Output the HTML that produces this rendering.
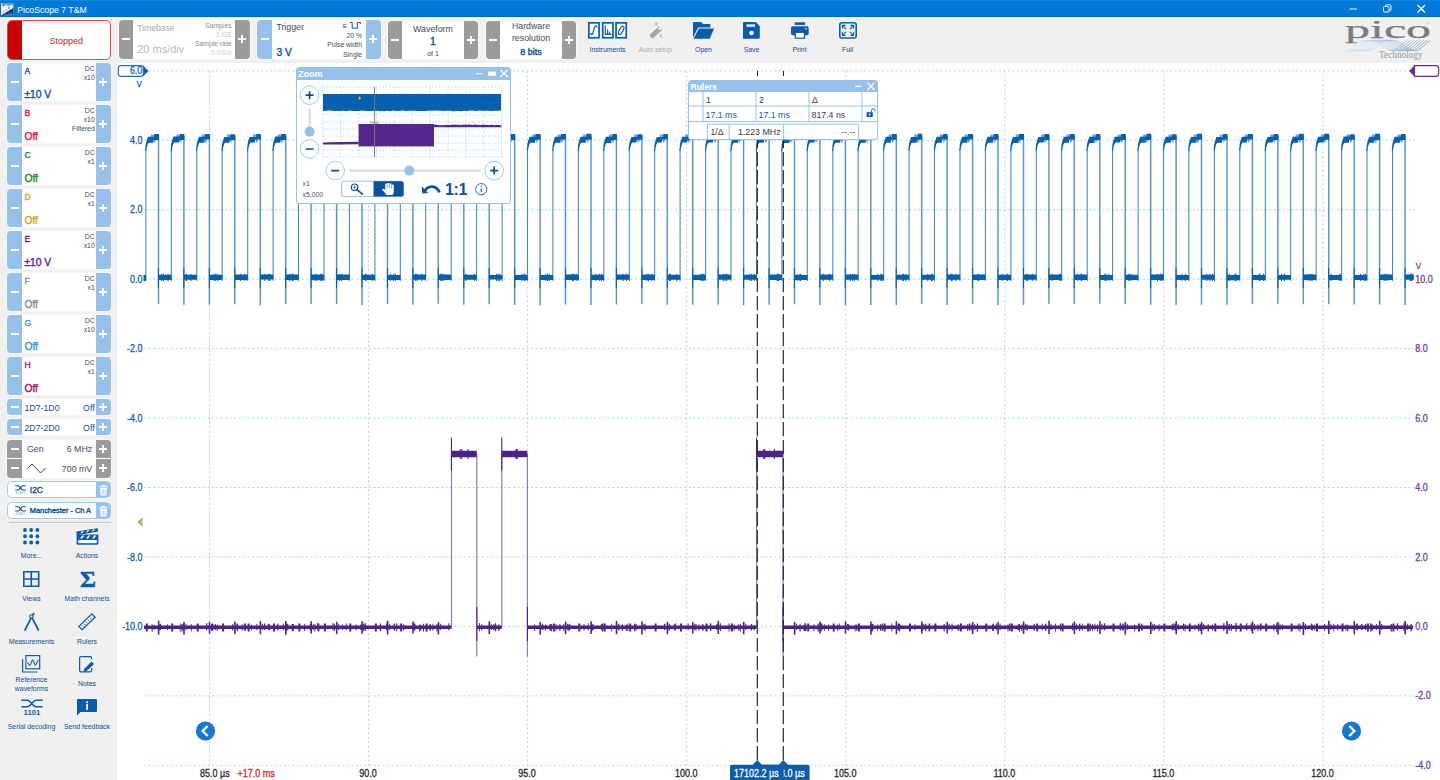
<!DOCTYPE html><html><head><meta charset="utf-8"><title>PicoScope 7 T&amp;M</title><style>

*{box-sizing:border-box;margin:0;padding:0}
html,body{width:1440px;height:780px;overflow:hidden}
body{background:#f0f0f0;font-family:"Liberation Sans",sans-serif;position:relative;color:#0b4f94}
.abs{position:absolute}
#title{left:0;top:0;width:1440px;height:17px;background:#0078d7;border-bottom:1px solid #0067cc;border-top:1px solid #1384db}
#title .t{position:absolute;left:17.3px;top:2.6px;font-size:8.7px;color:#fff;line-height:12px;white-space:nowrap}
#graphbg{left:117px;top:63px;width:1323px;height:717px;background:#fff}
.blk{position:absolute;background:#fff;border-radius:4px;overflow:hidden;box-shadow:0 0 0 0.8px rgba(255,255,255,.55)}
.btn{position:absolute;top:0;bottom:0;width:14.4px;background:#96c1eb}
.btn.g{background:#9b9b9b}
.btn.l{left:0}.btn.r{right:0}
.lp .btn.r{width:15.4px}
.btn i{position:absolute;left:50%;top:50%;background:#fff}
.btn i.h{width:8px;height:2px;margin-left:-4px;margin-top:-1px}
.btn i.v{width:2px;height:8px;margin-left:-1px;margin-top:-4px}
.tx{position:absolute;white-space:nowrap;line-height:1}
.sm{font-size:7.5px;color:#44546a;text-align:right;right:16.5px}
.lab{position:absolute;font-size:7.5px;color:#0b4f94;text-align:center;white-space:nowrap;line-height:9px;transform:translateX(-50%)}
svg{position:absolute;overflow:visible}
.sb{-webkit-text-stroke:0.35px currentColor}

</style></head><body>
<div id="graphbg" class="abs"></div>
<svg style="left:0;top:0" width="1440" height="780" viewBox="0 0 1440 780"><path d="M148.5 70.8H1409M144.2 140.2H1414.6M144.2 209.7H1414.6M144.2 279.2H1414.6M144.2 348.6H1414.6M144.2 418.1H1414.6M144.2 487.5H1414.6M144.2 557H1414.6M144.2 626.4H1414.6M144.2 695.9H1414.6M144.2 765.3H1414.6M209.5 70.8V765.5M368.6 70.8V765.5M527.6 70.8V765.5M686.7 70.8V765.5M845.8 70.8V765.5M1004.8 70.8V765.5M1163.9 70.8V765.5M1323 70.8V765.5" fill="none" stroke="#a3d7ee" stroke-width="1" stroke-dasharray="2 2.5"/><path d="M145.9 281V149M171.3 281V149M196.8 281V149M222.2 281V149M247.7 281V149M273.1 281V149M298.5 281V149M324 281V149M349.4 281V149M374.9 281V149M400.3 281V149M425.7 281V149M451.2 281V149M476.6 281V149M502.1 281V149M527.5 281V149M552.9 281V149M578.4 281V149M603.8 281V149M629.3 281V149M654.7 281V149M680.1 281V149M705.6 281V149M731 281V149M756.5 281V149M781.9 281V149M807.3 281V149M832.8 281V149M858.2 281V149M883.7 281V149M909.1 281V149M934.5 281V149M960 281V149M985.4 281V149M1010.9 281V149M1036.3 281V149M1061.7 281V149M1087.2 281V149M1112.6 281V149M1138.1 281V149M1163.5 281V149M1188.9 281V149M1214.4 281V149M1239.8 281V149M1265.3 281V149M1290.7 281V149M1316.1 281V149M1341.6 281V149M1367 281V149M1392.5 281V149" fill="none" stroke="#3f88c2" stroke-width="1.05"/><path d="M158.5 136V304M183.9 136V304.7M209.4 136V304.5M234.8 136V304.2M260.3 136V305.3M285.7 136V303.9M311.1 136V304M336.6 136V304M362 136V305.2M387.5 136V304M412.9 136V304.7M438.3 136V303.7M463.8 136V304.8M489.2 136V304.2M514.7 136V305.1M540.1 136V305.3M565.5 136V304.5M591 136V305.1M616.4 136V304.6M641.9 136V304M667.3 136V304.8M692.7 136V304.7M718.2 136V304.8M743.6 136V305.2M769.1 136V304.7M794.5 136V304.2M819.9 136V305M845.4 136V305.2M870.8 136V305.1M896.3 136V305.3M921.7 136V304.1M947.1 136V304.9M972.6 136V304.1M998 136V305.1M1023.5 136V305.1M1048.9 136V303.7M1074.3 136V303.9M1099.8 136V303.8M1125.2 136V304M1150.7 136V304.7M1176.1 136V305.1M1201.5 136V304.7M1227 136V304.8M1252.4 136V304.1M1277.9 136V303.8M1303.3 136V304.3M1328.7 136V304.3M1354.2 136V304.5M1379.6 136V304.5M1405.1 136V304.9" fill="none" stroke="#5496ca" stroke-width="1.45"/><path d="M150.8 134.5H154.4V137H150.8ZM176.5 134.5H179.8V137H176.5ZM201.7 134.5H205.3V137H201.7ZM227 134.5H230.7V137H227ZM252.8 134.5H256.2V137H252.8ZM277.8 134.5H281.6V137H277.8ZM303.2 134.5H307V137H303.2ZM328.7 134.5H332.5V137H328.7ZM354.3 134.5H357.9V137H354.3ZM379.9 134.5H383.4V137H379.9ZM405.1 134.5H408.8V137H405.1ZM430.8 134.5H434.2V137H430.8ZM456.3 134.5H459.7V137H456.3ZM481.5 134.5H485.1V137H481.5ZM506.9 134.5H510.6V137H506.9ZM532.2 134.5H536V137H532.2ZM557.6 134.5H561.4V137H557.6ZM583.1 134.5H586.9V137H583.1ZM608.9 134.5H612.3V137H608.9ZM634.1 134.5H637.8V137H634.1ZM659.8 134.5H663.2V137H659.8ZM684.9 134.5H688.6V137H684.9ZM710.2 134.5H714.1V137H710.2ZM736.1 134.5H739.5V137H736.1ZM761.6 134.5H765V137H761.6ZM786.8 134.5H790.4V137H786.8ZM812.4 134.5H815.8V137H812.4ZM837.9 134.5H841.3V137H837.9ZM863 134.5H866.7V137H863ZM888.6 134.5H892.2V137H888.6ZM914.2 134.5H917.6V137H914.2ZM939.7 134.5H943V137H939.7ZM964.7 134.5H968.5V137H964.7ZM990.4 134.5H993.9V137H990.4ZM1015.6 134.5H1019.4V137H1015.6ZM1041.2 134.5H1044.8V137H1041.2ZM1066.5 134.5H1070.2V137H1066.5ZM1092.3 134.5H1095.7V137H1092.3ZM1117.6 134.5H1121.1V137H1117.6ZM1143.1 134.5H1146.6V137H1143.1ZM1168.6 134.5H1172V137H1168.6ZM1193.6 134.5H1197.4V137H1193.6ZM1219.5 134.5H1222.9V137H1219.5ZM1244.7 134.5H1248.3V137H1244.7ZM1270.2 134.5H1273.8V137H1270.2ZM1295.6 134.5H1299.2V137H1295.6ZM1320.9 134.5H1324.6V137H1320.9ZM1346.7 134.5H1350.1V137H1346.7ZM1371.8 134.5H1375.5V137H1371.8ZM1397.6 134.5H1401V137H1397.6Z" fill="#6aa5d6"/><path d="M143.5 275H146V281H143.5ZM145.2 151L145.7 144.5L146.5 141L147.5 138.6L147.9 136.8H154L154.3 134H159V140H153.7L153.2 142.7H148.6L147.6 144.5L146.6 148.5L146.1 151ZM154.3 139.5h0.6v2.9h-0.6ZM155.4 139.5h0.5v2.3h-0.5ZM157.9 268H159V288H157.9ZM158.5 274.7H171.5V280H158.5ZM167.5 273.8H168.5V281H167.5ZM160.9 273.8H161.9V281H160.9ZM162.9 273.8H163.9V281H162.9ZM170.6 151L171.1 144.5L171.9 141L172.9 138.6L173.3 136.6H179.7L180 134.1H184.4V139.9H179.4L178.9 142.5H174L173 144.5L172 148.5L171.5 151ZM179.7 139.5h0.6v2.9h-0.6ZM180.8 139.5h0.5v2.3h-0.5ZM183.3 268H184.4V288H183.3ZM183.9 274.8H197V279.7H183.9ZM185.6 273.8H186.6V281H185.6ZM190.5 273.8H191.5V281H190.5ZM186 273.8H187V281H186ZM196.1 151L196.6 144.5L197.4 141L198.4 138.6L198.8 136.7H204.8L205.1 133.9H209.9V139.6H204.8L204.3 142.7H199.5L198.5 144.5L197.5 148.5L197 151ZM205.2 139.5h0.6v2.9h-0.6ZM206.3 139.5h0.5v2.3h-0.5ZM208.8 268H209.9V288H208.8ZM209.4 274.8H222.4V279.9H209.4ZM217.2 273.8H218.2V281H217.2ZM215.2 273.8H216.2V281H215.2ZM213.5 273.8H214.5V281H213.5ZM221.5 151L222 144.5L222.8 141L223.8 138.6L224.2 137H230.2L230.5 134.2H235.3V140H229.9L229.4 142.8H224.9L223.9 144.5L222.9 148.5L222.4 151ZM230.6 139.5h0.6v2.9h-0.6ZM231.7 139.5h0.5v2.3h-0.5ZM234.2 268H235.3V288H234.2ZM234.8 274.4H247.9V280.1H234.8ZM240.1 273.8H241.1V281H240.1ZM244.4 273.8H245.4V281H244.4ZM240 273.8H241V281H240ZM247 151L247.5 144.5L248.3 141L249.3 138.6L249.7 137H256L256.3 134.1H260.8V139.6H255.4L254.9 142.6H250.4L249.4 144.5L248.4 148.5L247.9 151ZM256.1 139.5h0.6v2.9h-0.6ZM257.2 139.5h0.5v2.3h-0.5ZM259.7 268H260.8V288H259.7ZM260.3 274.6H273.3V279.6H260.3ZM267.7 273.8H268.7V281H267.7ZM269.2 273.8H270.2V281H269.2ZM264.3 273.8H265.3V281H264.3ZM272.4 151L272.9 144.5L273.7 141L274.7 138.6L275.1 136.6H281L281.3 133.9H286.2V140H280.8L280.3 142.8H275.8L274.8 144.5L273.8 148.5L273.3 151ZM281.5 139.5h0.6v2.9h-0.6ZM282.6 139.5h0.5v2.3h-0.5ZM285.1 268H286.2V288H285.1ZM285.7 274.4H298.7V280.1H285.7ZM288.9 273.8H289.9V281H288.9ZM292.5 273.8H293.5V281H292.5ZM291.5 273.8H292.5V281H291.5ZM297.8 151L298.3 144.5L299.1 141L300.1 138.6L300.5 136.7H306.4L306.7 134.1H311.6V139.6H306.3L305.8 142.8H301.2L300.2 144.5L299.2 148.5L298.7 151ZM306.9 139.5h0.6v2.9h-0.6ZM308 139.5h0.5v2.3h-0.5ZM310.5 268H311.6V288H310.5ZM311.1 274.6H324.2V280.2H311.1ZM320.3 273.8H321.3V281H320.3ZM315.5 273.8H316.5V281H315.5ZM321 273.8H322V281H321ZM323.3 151L323.8 144.5L324.6 141L325.6 138.6L326 136.7H331.8L332.1 134H337.1V140H332L331.5 142.8H326.7L325.7 144.5L324.7 148.5L324.2 151ZM332.4 139.5h0.6v2.9h-0.6ZM333.5 139.5h0.5v2.3h-0.5ZM336 268H337.1V288H336ZM336.6 274.6H349.6V280.1H336.6ZM341.2 273.8H342.2V281H341.2ZM340.9 273.8H341.9V281H340.9ZM338.8 273.8H339.8V281H338.8ZM348.7 151L349.2 144.5L350 141L351 138.6L351.4 136.6H357.4L357.7 134H362.5V139.7H357.2L356.7 142.7H352.1L351.1 144.5L350.1 148.5L349.6 151ZM357.8 139.5h0.6v2.9h-0.6ZM358.9 139.5h0.5v2.3h-0.5ZM361.4 268H362.5V288H361.4ZM362 274.7H375.1V279.9H362ZM371.8 273.8H372.8V281H371.8ZM365.3 273.8H366.3V281H365.3ZM365 273.8H366V281H365ZM374.2 151L374.7 144.5L375.5 141L376.5 138.6L376.9 137H383.1L383.4 134.1H388V139.7H382.9L382.4 142.6H377.6L376.6 144.5L375.6 148.5L375.1 151ZM383.3 139.5h0.6v2.9h-0.6ZM384.4 139.5h0.5v2.3h-0.5ZM386.9 268H388V288H386.9ZM387.5 275H400.5V280.1H387.5ZM394.7 273.8H395.7V281H394.7ZM393 273.8H394V281H393ZM389.9 273.8H390.9V281H389.9ZM399.6 151L400.1 144.5L400.9 141L401.9 138.6L402.3 136.6H408.3L408.6 134.2H413.4V139.7H408.3L407.8 142.8H403L402 144.5L401 148.5L400.5 151ZM408.7 139.5h0.6v2.9h-0.6ZM409.8 139.5h0.5v2.3h-0.5ZM412.3 268H413.4V288H412.3ZM412.9 274.6H425.9V279.7H412.9ZM421.2 273.8H422.2V281H421.2ZM415.1 273.8H416.1V281H415.1ZM416.6 273.8H417.6V281H416.6ZM425 151L425.5 144.5L426.3 141L427.3 138.6L427.7 136.8H434.1L434.4 134.1H438.8V139.9H433.4L432.9 142.6H428.4L427.4 144.5L426.4 148.5L425.9 151ZM434.1 139.5h0.6v2.9h-0.6ZM435.2 139.5h0.5v2.3h-0.5ZM437.7 268H438.8V288H437.7ZM438.3 274.6H451.4V279.9H438.3ZM440.4 273.8H441.4V281H440.4ZM441.5 273.8H442.5V281H441.5ZM443.3 273.8H444.3V281H443.3ZM450.5 151L451 144.5L451.8 141L452.8 138.6L453.2 136.8H459.6L459.9 133.9H464.3V139.7H459.1L458.6 142.9H453.9L452.9 144.5L451.9 148.5L451.4 151ZM459.6 139.5h0.6v2.9h-0.6ZM460.7 139.5h0.5v2.3h-0.5ZM463.2 268H464.3V288H463.2ZM463.8 274.8H476.8V279.7H463.8ZM465.6 273.8H466.6V281H465.6ZM465.4 273.8H466.4V281H465.4ZM473.9 273.8H474.9V281H473.9ZM475.9 151L476.4 144.5L477.2 141L478.2 138.6L478.6 136.9H484.7L485 134.2H489.7V139.6H484.5L484 142.8H479.3L478.3 144.5L477.3 148.5L476.8 151ZM485 139.5h0.6v2.9h-0.6ZM486.1 139.5h0.5v2.3h-0.5ZM488.6 268H489.7V288H488.6ZM489.2 275H502.3V279.6H489.2ZM495.9 273.8H496.9V281H495.9ZM497.7 273.8H498.7V281H497.7ZM499.3 273.8H500.3V281H499.3ZM501.4 151L501.9 144.5L502.7 141L503.7 138.6L504.1 136.9H510.1L510.4 134.1H515.2V139.9H510L509.5 142.9H504.8L503.8 144.5L502.8 148.5L502.3 151ZM510.5 139.5h0.6v2.9h-0.6ZM511.6 139.5h0.5v2.3h-0.5ZM514.1 268H515.2V288H514.1ZM514.7 274.9H527.7V279.9H514.7ZM523.7 273.8H524.7V281H523.7ZM524.4 273.8H525.4V281H524.4ZM521.6 273.8H522.6V281H521.6ZM526.8 151L527.3 144.5L528.1 141L529.1 138.6L529.5 136.8H535.3L535.6 134H540.6V139.8H535.4L534.9 142.7H530.2L529.2 144.5L528.2 148.5L527.7 151ZM535.9 139.5h0.6v2.9h-0.6ZM537 139.5h0.5v2.3h-0.5ZM539.5 268H540.6V288H539.5ZM540.1 274.9H553.1V280H540.1ZM545.3 273.8H546.3V281H545.3ZM548.6 273.8H549.6V281H548.6ZM547.1 273.8H548.1V281H547.1ZM552.2 151L552.7 144.5L553.5 141L554.5 138.6L554.9 136.8H560.8L561.1 134.1H566V139.6H560.8L560.3 142.8H555.6L554.6 144.5L553.6 148.5L553.1 151ZM561.3 139.5h0.6v2.9h-0.6ZM562.4 139.5h0.5v2.3h-0.5ZM564.9 268H566V288H564.9ZM565.5 274.5H578.6V280H565.5ZM571.8 273.8H572.8V281H571.8ZM572.9 273.8H573.9V281H572.9ZM575.8 273.8H576.8V281H575.8ZM577.7 151L578.2 144.5L579 141L580 138.6L580.4 136.7H586.3L586.6 133.8H591.5V139.7H586L585.5 142.8H581.1L580.1 144.5L579.1 148.5L578.6 151ZM586.8 139.5h0.6v2.9h-0.6ZM587.9 139.5h0.5v2.3h-0.5ZM590.4 268H591.5V288H590.4ZM591 274.8H604V279.9H591ZM601 273.8H602V281H601ZM595.6 273.8H596.6V281H595.6ZM598.8 273.8H599.8V281H598.8ZM603.1 151L603.6 144.5L604.4 141L605.4 138.6L605.8 136.7H612.1L612.4 134H616.9V140H611.6L611.1 142.9H606.5L605.5 144.5L604.5 148.5L604 151ZM612.2 139.5h0.6v2.9h-0.6ZM613.3 139.5h0.5v2.3h-0.5ZM615.8 268H616.9V288H615.8ZM616.4 274.6H629.5V279.7H616.4ZM622.6 273.8H623.6V281H622.6ZM625.9 273.8H626.9V281H625.9ZM626 273.8H627V281H626ZM628.6 151L629.1 144.5L629.9 141L630.9 138.6L631.3 136.9H637.3L637.6 134.2H642.4V139.7H636.9L636.4 142.6H632L631 144.5L630 148.5L629.5 151ZM637.7 139.5h0.6v2.9h-0.6ZM638.8 139.5h0.5v2.3h-0.5ZM641.3 268H642.4V288H641.3ZM641.9 274.6H654.9V280H641.9ZM648.1 273.8H649.1V281H648.1ZM646.4 273.8H647.4V281H646.4ZM651.3 273.8H652.3V281H651.3ZM654 151L654.5 144.5L655.3 141L656.3 138.6L656.7 137H663L663.3 134H667.8V139.6H662.3L661.8 142.5H657.4L656.4 144.5L655.4 148.5L654.9 151ZM663.1 139.5h0.6v2.9h-0.6ZM664.2 139.5h0.5v2.3h-0.5ZM666.7 268H667.8V288H666.7ZM667.3 274.7H680.3V279.8H667.3ZM676.3 273.8H677.3V281H676.3ZM669 273.8H670V281H669ZM670.1 273.8H671.1V281H670.1ZM679.4 151L679.9 144.5L680.7 141L681.7 138.6L682.1 136.8H688L688.3 133.8H693.2V140H687.7L687.2 142.6H682.8L681.8 144.5L680.8 148.5L680.3 151ZM688.5 139.5h0.6v2.9h-0.6ZM689.6 139.5h0.5v2.3h-0.5ZM692.1 268H693.2V288H692.1ZM692.7 274.7H705.8V280H692.7ZM700.5 273.8H701.5V281H700.5ZM701.9 273.8H702.9V281H701.9ZM703.3 273.8H704.3V281H703.3ZM704.9 151L705.4 144.5L706.2 141L707.2 138.6L707.6 136.9H713.4L713.7 133.9H718.7V139.8H713.4L712.9 142.6H708.3L707.3 144.5L706.3 148.5L705.8 151ZM714 139.5h0.6v2.9h-0.6ZM715.1 139.5h0.5v2.3h-0.5ZM717.6 268H718.7V288H717.6ZM718.2 274.5H731.2V279.8H718.2ZM723 273.8H724V281H723ZM726.3 273.8H727.3V281H726.3ZM724.6 273.8H725.6V281H724.6ZM730.3 151L730.8 144.5L731.6 141L732.6 138.6L733 136.8H739.4L739.7 134.1H744.1V139.7H738.6L738.1 142.8H733.7L732.7 144.5L731.7 148.5L731.2 151ZM739.4 139.5h0.6v2.9h-0.6ZM740.5 139.5h0.5v2.3h-0.5ZM743 268H744.1V288H743ZM743.6 274.8H756.7V279.7H743.6ZM749.4 273.8H750.4V281H749.4ZM751.1 273.8H752.1V281H751.1ZM753.8 273.8H754.8V281H753.8ZM755.8 151L756.3 144.5L757.1 141L758.1 138.6L758.5 136.8H764.8L765.1 134H769.6V140H764.2L763.7 142.8H759.2L758.2 144.5L757.2 148.5L756.7 151ZM764.9 139.5h0.6v2.9h-0.6ZM766 139.5h0.5v2.3h-0.5ZM768.5 268H769.6V288H768.5ZM769.1 274.5H782.1V280H769.1ZM778.3 273.8H779.3V281H778.3ZM776.7 273.8H777.7V281H776.7ZM777.4 273.8H778.4V281H777.4ZM781.2 151L781.7 144.5L782.5 141L783.5 138.6L783.9 136.7H790L790.3 134.2H795V140H789.8L789.3 142.9H784.6L783.6 144.5L782.6 148.5L782.1 151ZM790.3 139.5h0.6v2.9h-0.6ZM791.4 139.5h0.5v2.3h-0.5ZM793.9 268H795V288H793.9ZM794.5 274.9H807.5V280.1H794.5ZM799.3 273.8H800.3V281H799.3ZM796.8 273.8H797.8V281H796.8ZM800.2 273.8H801.2V281H800.2ZM806.6 151L807.1 144.5L807.9 141L808.9 138.6L809.3 136.8H815.6L815.9 134.1H820.4V139.8H814.9L814.4 142.5H810L809 144.5L808 148.5L807.5 151ZM815.7 139.5h0.6v2.9h-0.6ZM816.8 139.5h0.5v2.3h-0.5ZM819.3 268H820.4V288H819.3ZM819.9 274.5H833V279.8H819.9ZM828.9 273.8H829.9V281H828.9ZM822.8 273.8H823.8V281H822.8ZM822.9 273.8H823.9V281H822.9ZM832.1 151L832.6 144.5L833.4 141L834.4 138.6L834.8 136.8H841.1L841.4 134.1H845.9V140H840.6L840.1 142.8H835.5L834.5 144.5L833.5 148.5L833 151ZM841.2 139.5h0.6v2.9h-0.6ZM842.3 139.5h0.5v2.3h-0.5ZM844.8 268H845.9V288H844.8ZM845.4 274.5H858.4V279.7H845.4ZM851.9 273.8H852.9V281H851.9ZM849.6 273.8H850.6V281H849.6ZM853.8 273.8H854.8V281H853.8ZM857.5 151L858 144.5L858.8 141L859.8 138.6L860.2 136.9H866.2L866.5 134H871.3V140H866L865.5 142.7H860.9L859.9 144.5L858.9 148.5L858.4 151ZM866.6 139.5h0.6v2.9h-0.6ZM867.7 139.5h0.5v2.3h-0.5ZM870.2 268H871.3V288H870.2ZM870.8 274.9H883.9V279.7H870.8ZM880.4 273.8H881.4V281H880.4ZM881.5 273.8H882.5V281H881.5ZM877.3 273.8H878.3V281H877.3ZM883 151L883.5 144.5L884.3 141L885.3 138.6L885.7 136.8H891.8L892.1 133.9H896.8V139.8H891.2L890.7 142.7H886.4L885.4 144.5L884.4 148.5L883.9 151ZM892.1 139.5h0.6v2.9h-0.6ZM893.2 139.5h0.5v2.3h-0.5ZM895.7 268H896.8V288H895.7ZM896.3 274.7H909.3V279.8H896.3ZM905.4 273.8H906.4V281H905.4ZM903.1 273.8H904.1V281H903.1ZM902.4 273.8H903.4V281H902.4ZM908.4 151L908.9 144.5L909.7 141L910.7 138.6L911.1 136.9H917.5L917.8 133.8H922.2V139.8H917.1L916.6 142.7H911.8L910.8 144.5L909.8 148.5L909.3 151ZM917.5 139.5h0.6v2.9h-0.6ZM918.6 139.5h0.5v2.3h-0.5ZM921.1 268H922.2V288H921.1ZM921.7 274.7H934.7V279.7H921.7ZM927.3 273.8H928.3V281H927.3ZM930.9 273.8H931.9V281H930.9ZM931.8 273.8H932.8V281H931.8ZM933.8 151L934.3 144.5L935.1 141L936.1 138.6L936.5 136.8H942.9L943.2 133.9H947.6V139.6H942.2L941.7 142.7H937.2L936.2 144.5L935.2 148.5L934.7 151ZM942.9 139.5h0.6v2.9h-0.6ZM944 139.5h0.5v2.3h-0.5ZM946.5 268H947.6V288H946.5ZM947.1 274.4H960.2V279.7H947.1ZM950.8 273.8H951.8V281H950.8ZM955.2 273.8H956.2V281H955.2ZM951.7 273.8H952.7V281H951.7ZM959.3 151L959.8 144.5L960.6 141L961.6 138.6L962 136.7H967.9L968.2 134H973.1V139.6H967.8L967.3 142.8H962.7L961.7 144.5L960.7 148.5L960.2 151ZM968.4 139.5h0.6v2.9h-0.6ZM969.5 139.5h0.5v2.3h-0.5ZM972 268H973.1V288H972ZM972.6 274.5H985.6V279.9H972.6ZM978.2 273.8H979.2V281H978.2ZM977.6 273.8H978.6V281H977.6ZM978 273.8H979V281H978ZM984.7 151L985.2 144.5L986 141L987 138.6L987.4 136.8H993.6L993.9 133.9H998.5V139.7H993.2L992.7 142.8H988.1L987.1 144.5L986.1 148.5L985.6 151ZM993.8 139.5h0.6v2.9h-0.6ZM994.9 139.5h0.5v2.3h-0.5ZM997.4 268H998.5V288H997.4ZM998 274.8H1011.1V280.1H998ZM1001.7 273.8H1002.7V281H1001.7ZM1006.6 273.8H1007.6V281H1006.6ZM1007.2 273.8H1008.2V281H1007.2ZM1010.2 151L1010.7 144.5L1011.5 141L1012.5 138.6L1012.9 137H1018.8L1019.1 133.9H1024V139.7H1018.9L1018.4 142.9H1013.6L1012.6 144.5L1011.6 148.5L1011.1 151ZM1019.3 139.5h0.6v2.9h-0.6ZM1020.4 139.5h0.5v2.3h-0.5ZM1022.9 268H1024V288H1022.9ZM1023.5 274.5H1036.5V279.7H1023.5ZM1031.9 273.8H1032.9V281H1031.9ZM1027.4 273.8H1028.4V281H1027.4ZM1025.9 273.8H1026.9V281H1025.9ZM1035.6 151L1036.1 144.5L1036.9 141L1037.9 138.6L1038.3 136.9H1044.3L1044.6 134H1049.4V139.9H1044.2L1043.7 142.6H1039L1038 144.5L1037 148.5L1036.5 151ZM1044.7 139.5h0.6v2.9h-0.6ZM1045.8 139.5h0.5v2.3h-0.5ZM1048.3 268H1049.4V288H1048.3ZM1048.9 274.5H1061.9V280H1048.9ZM1059.1 273.8H1060.1V281H1059.1ZM1059.6 273.8H1060.6V281H1059.6ZM1051.5 273.8H1052.5V281H1051.5ZM1061 151L1061.5 144.5L1062.3 141L1063.3 138.6L1063.7 136.8H1069.7L1070 134.1H1074.8V139.8H1069.3L1068.8 142.8H1064.4L1063.4 144.5L1062.4 148.5L1061.9 151ZM1070.1 139.5h0.6v2.9h-0.6ZM1071.2 139.5h0.5v2.3h-0.5ZM1073.7 268H1074.8V288H1073.7ZM1074.3 274.4H1087.4V279.9H1074.3ZM1080.7 273.8H1081.7V281H1080.7ZM1081.2 273.8H1082.2V281H1081.2ZM1077.2 273.8H1078.2V281H1077.2ZM1086.5 151L1087 144.5L1087.8 141L1088.8 138.6L1089.2 136.7H1095.5L1095.8 133.9H1100.3V140H1094.8L1094.3 142.9H1089.9L1088.9 144.5L1087.9 148.5L1087.4 151ZM1095.6 139.5h0.6v2.9h-0.6ZM1096.7 139.5h0.5v2.3h-0.5ZM1099.2 268H1100.3V288H1099.2ZM1099.8 275H1112.8V279.9H1099.8ZM1108.5 273.8H1109.5V281H1108.5ZM1104.4 273.8H1105.4V281H1104.4ZM1105.7 273.8H1106.7V281H1105.7ZM1111.9 151L1112.4 144.5L1113.2 141L1114.2 138.6L1114.6 136.8H1120.8L1121.1 134H1125.7V139.9H1120.6L1120.1 142.5H1115.3L1114.3 144.5L1113.3 148.5L1112.8 151ZM1121 139.5h0.6v2.9h-0.6ZM1122.1 139.5h0.5v2.3h-0.5ZM1124.6 268H1125.7V288H1124.6ZM1125.2 274.7H1138.3V280H1125.2ZM1130.6 273.8H1131.6V281H1130.6ZM1128.6 273.8H1129.6V281H1128.6ZM1128.3 273.8H1129.3V281H1128.3ZM1137.4 151L1137.9 144.5L1138.7 141L1139.7 138.6L1140.1 136.8H1146.3L1146.6 133.8H1151.2V140H1146L1145.5 142.8H1140.8L1139.8 144.5L1138.8 148.5L1138.3 151ZM1146.5 139.5h0.6v2.9h-0.6ZM1147.6 139.5h0.5v2.3h-0.5ZM1150.1 268H1151.2V288H1150.1ZM1150.7 274.6H1163.7V280H1150.7ZM1157 273.8H1158V281H1157ZM1161.5 273.8H1162.5V281H1161.5ZM1159.8 273.8H1160.8V281H1159.8ZM1162.8 151L1163.3 144.5L1164.1 141L1165.1 138.6L1165.5 136.7H1171.8L1172.1 134.2H1176.6V139.9H1171.3L1170.8 142.8H1166.2L1165.2 144.5L1164.2 148.5L1163.7 151ZM1171.9 139.5h0.6v2.9h-0.6ZM1173 139.5h0.5v2.3h-0.5ZM1175.5 268H1176.6V288H1175.5ZM1176.1 274.9H1189.1V280H1176.1ZM1184.9 273.8H1185.9V281H1184.9ZM1184.9 273.8H1185.9V281H1184.9ZM1181.5 273.8H1182.5V281H1181.5ZM1188.2 151L1188.7 144.5L1189.5 141L1190.5 138.6L1190.9 136.9H1196.7L1197 133.8H1202V139.7H1196.7L1196.2 142.7H1191.6L1190.6 144.5L1189.6 148.5L1189.1 151ZM1197.3 139.5h0.6v2.9h-0.6ZM1198.4 139.5h0.5v2.3h-0.5ZM1200.9 268H1202V288H1200.9ZM1201.5 274.8H1214.6V279.7H1201.5ZM1212 273.8H1213V281H1212ZM1209.4 273.8H1210.4V281H1209.4ZM1206.2 273.8H1207.2V281H1206.2ZM1213.7 151L1214.2 144.5L1215 141L1216 138.6L1216.4 136.9H1222.8L1223.1 134H1227.5V139.8H1222.3L1221.8 142.7H1217.1L1216.1 144.5L1215.1 148.5L1214.6 151ZM1222.8 139.5h0.6v2.9h-0.6ZM1223.9 139.5h0.5v2.3h-0.5ZM1226.4 268H1227.5V288H1226.4ZM1227 274.9H1240V280.2H1227ZM1228.7 273.8H1229.7V281H1228.7ZM1234.3 273.8H1235.3V281H1234.3ZM1235.5 273.8H1236.5V281H1235.5ZM1239.1 151L1239.6 144.5L1240.4 141L1241.4 138.6L1241.8 136.7H1247.8L1248.1 134H1252.9V139.6H1247.4L1246.9 142.6H1242.5L1241.5 144.5L1240.5 148.5L1240 151ZM1248.2 139.5h0.6v2.9h-0.6ZM1249.3 139.5h0.5v2.3h-0.5ZM1251.8 268H1252.9V288H1251.8ZM1252.4 274.9H1265.5V279.9H1252.4ZM1258.7 273.8H1259.7V281H1258.7ZM1263.1 273.8H1264.1V281H1263.1ZM1259.3 273.8H1260.3V281H1259.3ZM1264.6 151L1265.1 144.5L1265.9 141L1266.9 138.6L1267.3 137H1273.4L1273.7 134.1H1278.4V140H1273.2L1272.7 142.5H1268L1267 144.5L1266 148.5L1265.5 151ZM1273.7 139.5h0.6v2.9h-0.6ZM1274.8 139.5h0.5v2.3h-0.5ZM1277.3 268H1278.4V288H1277.3ZM1277.9 275H1290.9V279.7H1277.9ZM1283.8 273.8H1284.8V281H1283.8ZM1281 273.8H1282V281H1281ZM1284.1 273.8H1285.1V281H1284.1ZM1290 151L1290.5 144.5L1291.3 141L1292.3 138.6L1292.7 136.8H1298.8L1299.1 133.8H1303.8V140H1298.5L1298 142.7H1293.4L1292.4 144.5L1291.4 148.5L1290.9 151ZM1299.1 139.5h0.6v2.9h-0.6ZM1300.2 139.5h0.5v2.3h-0.5ZM1302.7 268H1303.8V288H1302.7ZM1303.3 274.6H1316.3V280H1303.3ZM1310.1 273.8H1311.1V281H1310.1ZM1307.5 273.8H1308.5V281H1307.5ZM1311.6 273.8H1312.6V281H1311.6ZM1315.4 151L1315.9 144.5L1316.7 141L1317.7 138.6L1318.1 136.7H1324L1324.3 133.8H1329.2V139.7H1324.1L1323.6 142.5H1318.8L1317.8 144.5L1316.8 148.5L1316.3 151ZM1324.5 139.5h0.6v2.9h-0.6ZM1325.6 139.5h0.5v2.3h-0.5ZM1328.1 268H1329.2V288H1328.1ZM1328.7 274.9H1341.8V280H1328.7ZM1330.7 273.8H1331.7V281H1330.7ZM1339.6 273.8H1340.6V281H1339.6ZM1339.2 273.8H1340.2V281H1339.2ZM1340.9 151L1341.4 144.5L1342.2 141L1343.2 138.6L1343.6 136.6H1350L1350.3 134.2H1354.7V139.8H1349.3L1348.8 142.7H1344.3L1343.3 144.5L1342.3 148.5L1341.8 151ZM1350 139.5h0.6v2.9h-0.6ZM1351.1 139.5h0.5v2.3h-0.5ZM1353.6 268H1354.7V288H1353.6ZM1354.2 275H1367.2V280H1354.2ZM1360.1 273.8H1361.1V281H1360.1ZM1365 273.8H1366V281H1365ZM1363.4 273.8H1364.4V281H1363.4ZM1366.3 151L1366.8 144.5L1367.6 141L1368.6 138.6L1369 136.8H1374.9L1375.2 133.8H1380.1V139.9H1374.6L1374.1 142.7H1369.7L1368.7 144.5L1367.7 148.5L1367.2 151ZM1375.4 139.5h0.6v2.9h-0.6ZM1376.5 139.5h0.5v2.3h-0.5ZM1379 268H1380.1V288H1379ZM1379.6 274.5H1392.7V279.9H1379.6ZM1387.5 273.8H1388.5V281H1387.5ZM1385.4 273.8H1386.4V281H1385.4ZM1383.6 273.8H1384.6V281H1383.6ZM1391.8 151L1392.3 144.5L1393.1 141L1394.1 138.6L1394.5 136.8H1400.9L1401.2 134H1405.6V139.9H1400.5L1400 142.7H1395.2L1394.2 144.5L1393.2 148.5L1392.7 151ZM1400.9 139.5h0.6v2.9h-0.6ZM1402 139.5h0.5v2.3h-0.5ZM1404.5 268H1405.6V288H1404.5ZM1405.1 274.5H1413.8V279.7H1405.1ZM1411.5 273.8H1412.5V281H1411.5ZM1410.9 273.8H1411.9V281H1410.9ZM1410 273.8H1411V281H1410Z" fill="#0560ae"/><path d="M451.5 627.3V454M476.8 454V656.5M501.8 627.3V454M527.4 454V656.5M756.6 627.3V454M783 454V656.5" fill="none" stroke="#9476bb" stroke-width="1.2"/><path d="M144 625.5H451.5V629.1H144ZM476.8 625.5H501.8V629.1H476.8ZM527.4 625.5H756.6V629.1H527.4ZM783 625.5H1413V629.1H783ZM451.5 450.8H476.8V457.2H451.5ZM450.9 437.5H452V470.5H450.9ZM476.3 607H477.4V641H476.3ZM461.3 449H462.3V459H461.3ZM459.7 449H460.7V459H459.7ZM467.5 449H468.5V459H467.5ZM501.8 450.8H527.4V457.2H501.8ZM501.2 437.5H502.3V470.5H501.2ZM526.9 607H528V641H526.9ZM515.5 449H516.5V459H515.5ZM516 449H517V459H516ZM516.8 449H517.8V459H516.8ZM756.6 450.8H783V457.2H756.6ZM756 437.5H757.1V470.5H756ZM782.5 607H783.6V641H782.5ZM773.9 449H774.9V459H773.9ZM763.2 449H764.2V459H763.2ZM764.3 449H765.3V459H764.3ZM157.8 620.7H159.4V634.8H157.8ZM160.1 623.7H161.1V629.9H160.1ZM145.8 623.5H147.8V631.5H145.8ZM167 624.6H168V630H167ZM153.7 624.7H154.6V630H153.7ZM159.7 624.6H161V630.1H159.7ZM151.6 624.3H152.6V631.7H151.6ZM158.4 624.4H159.7V630.5H158.4ZM183.2 621.9H184.8V634.7H183.2ZM185.5 623.7H186.5V629.9H185.5ZM171.2 623.5H173.2V631.5H171.2ZM190.8 624H191.7V631.4H190.8ZM183.1 623.5H184V630.6H183.1ZM181.5 623.7H182.5V631.7H181.5ZM179.8 623.5H180.7V631.4H179.8ZM182.7 624.1H183.7V630.1H182.7ZM208.7 622H210.3V633.4H208.7ZM211 623.7H212V629.9H211ZM196.7 623.5H198.7V631.5H196.7ZM211.1 623.9H212.1V631.1H211.1ZM216.7 624.7H218V630.5H216.7ZM212 623.6H213.3V630.8H212ZM206 623.3H207.3V630.3H206ZM214.6 624.1H215.9V630.1H214.6ZM234.1 621.5H235.7V634.3H234.1ZM236.4 623.7H237.4V629.9H236.4ZM222.1 623.5H224.1V631.5H222.1ZM243.8 623.6H245.1V630.4H243.8ZM241.7 624.2H242.7V630.5H241.7ZM245.2 623.5H246.1V630.8H245.2ZM232.2 624.1H233.2V630.6H232.2ZM237 623.4H238V631.2H237ZM259.6 621H261.2V634.2H259.6ZM261.9 623.7H262.9V629.9H261.9ZM247.6 623.5H249.6V631.5H247.6ZM267.8 623.8H268.8V630.2H267.8ZM268.8 624.2H270.1V629.9H268.8ZM251.1 624.4H252V630.4H251.1ZM263.9 623.4H265.2V630H263.9ZM256.4 623.8H257.4V630.5H256.4ZM285 621.1H286.6V634.7H285ZM287.3 623.7H288.3V629.9H287.3ZM273 623.5H275V631.5H273ZM277.1 623.7H278.4V630.2H277.1ZM292.8 624H293.8V631.2H292.8ZM291.8 623.9H292.8V631.3H291.8ZM282.8 623.4H283.7V630.5H282.8ZM285.9 623.8H287.2V631.2H285.9ZM310.4 621.2H312V633.4H310.4ZM312.7 623.7H313.7V629.9H312.7ZM298.4 623.5H300.4V631.5H298.4ZM317 623.1H317.9V630.5H317ZM318.1 623.4H319.4V631.5H318.1ZM314.5 623.9H315.4V631.2H314.5ZM309.8 624H311.1V630.2H309.8ZM304.2 623.7H305.2V631.1H304.2ZM335.9 621.8H337.5V634H335.9ZM338.2 623.7H339.2V629.9H338.2ZM323.9 623.5H325.9V631.5H323.9ZM332.5 623.1H333.5V630H332.5ZM341.9 624.2H342.8V630.2H341.9ZM345.8 623.5H346.8V629.9H345.8ZM345.7 624.6H346.6V630.1H345.7ZM333.9 623.8H334.9V631H333.9ZM361.3 621.3H362.9V633.7H361.3ZM363.6 623.7H364.6V629.9H363.6ZM349.3 623.5H351.3V631.5H349.3ZM355.6 624.3H356.6V630.2H355.6ZM365.1 623.2H366.1V630.9H365.1ZM362 624.1H363.3V631.6H362ZM363.4 623.2H364.3V630.8H363.4ZM360.2 624.4H361.2V630.1H360.2ZM386.8 620.7H388.4V634.6H386.8ZM389.1 623.7H390.1V629.9H389.1ZM374.8 623.5H376.8V631.5H374.8ZM393.7 623.4H394.6V630H393.7ZM396.2 623.3H397.2V631.5H396.2ZM394.2 623.6H395.1V631H394.2ZM386 623.5H387.3V630.2H386ZM379.9 623.5H381.2V631H379.9ZM412.2 621.4H413.8V633.5H412.2ZM414.5 623.7H415.5V629.9H414.5ZM400.2 623.5H402.2V631.5H400.2ZM419.1 624.7H420V631.4H419.1ZM420.2 624.6H421.5V630.4H420.2ZM413.9 623.3H414.8V631.1H413.9ZM423 623.8H424V631.4H423ZM402.9 624.4H404.2V630.2H402.9ZM437.6 622H439.2V634.6H437.6ZM439.9 623.7H440.9V629.9H439.9ZM425.6 623.5H427.6V631.5H425.6ZM432.4 623.8H433.3V630.8H432.4ZM448.3 623.2H449.3V630.5H448.3ZM429.6 624.2H430.9V630.7H429.6ZM429.4 624.6H430.7V630.2H429.4ZM436.4 624H437.3V631.6H436.4ZM488.5 621.3H490.1V634H488.5ZM490.8 623.7H491.8V629.9H490.8ZM479 623.1H479.9V631.3H479ZM498.2 624.5H499.5V631H498.2ZM494.9 623.2H496.2V631.3H494.9ZM493.2 624.3H494.5V630.3H493.2ZM481.2 624.2H482.2V630.4H481.2ZM539.4 622H541V634.4H539.4ZM541.7 623.7H542.7V629.9H541.7ZM544.9 624.4H545.9V630.6H544.9ZM542.4 624.6H543.3V630.3H542.4ZM550.9 624H551.9V631.3H550.9ZM549.5 624H550.8V630.8H549.5ZM534.1 624.5H535.1V631.1H534.1ZM564.8 621.6H566.4V634H564.8ZM567.1 623.7H568.1V629.9H567.1ZM552.8 623.5H554.8V631.5H552.8ZM555.5 624.1H556.4V631.2H555.5ZM569.3 623.7H570.3V629.9H569.3ZM559.2 624.2H560.5V630.7H559.2ZM563.3 623.9H564.2V631.3H563.3ZM568.3 624.4H569.3V631.3H568.3ZM590.3 621.3H591.9V633.9H590.3ZM592.6 623.7H593.6V629.9H592.6ZM578.3 623.5H580.3V631.5H578.3ZM591.3 624.5H592.6V631.2H591.3ZM602 623.6H603.3V631.6H602ZM600.9 623.7H601.8V630.3H600.9ZM583.5 623.9H584.5V630.7H583.5ZM587.7 623.2H588.7V630.6H587.7ZM615.7 620.9H617.3V634H615.7ZM618 623.7H619V629.9H618ZM603.7 623.5H605.7V631.5H603.7ZM621.7 624.3H623V630.9H621.7ZM618.1 623.8H619.4V630.4H618.1ZM627.4 623.4H628.3V631H627.4ZM626.1 624.7H627.1V631.1H626.1ZM611.2 623.8H612.1V631.4H611.2ZM641.2 621.3H642.8V634.6H641.2ZM643.5 623.7H644.5V629.9H643.5ZM629.2 623.5H631.2V631.5H629.2ZM641.2 624.1H642.5V631.3H641.2ZM634.4 623.5H635.4V631.4H634.4ZM644.7 623.7H645.6V631.3H644.7ZM635.7 624H636.7V630.2H635.7ZM634 624.1H634.9V630.5H634ZM666.6 621.7H668.2V634.2H666.6ZM668.9 623.7H669.9V629.9H668.9ZM654.6 623.5H656.6V631.5H654.6ZM664 623.7H665.3V630H664ZM673.8 624.1H674.7V630.8H673.8ZM667 624H668.3V631H667ZM669 624H670V630.4H669ZM674.9 623.3H675.9V630.6H674.9ZM692 621.9H693.6V633.5H692ZM694.3 623.7H695.3V629.9H694.3ZM680 623.5H682V631.5H680ZM702.5 624.2H703.5V630.8H702.5ZM701.8 624.2H703.1V630H701.8ZM695.6 624H696.6V630.6H695.6ZM698.5 624.2H699.4V631H698.5ZM687.6 623.3H688.6V630.3H687.6ZM717.5 620.7H719.1V634.1H717.5ZM719.8 623.7H720.8V629.9H719.8ZM705.5 623.5H707.5V631.5H705.5ZM710 623.2H711.3V630.9H710ZM716.3 624.3H717.6V630H716.3ZM728.6 623.6H729.6V631.5H728.6ZM719.9 624.4H720.9V631.1H719.9ZM720 623.3H720.9V630.1H720ZM742.9 621.9H744.5V634.2H742.9ZM745.2 623.7H746.2V629.9H745.2ZM730.9 623.5H732.9V631.5H730.9ZM753.7 624.7H754.7V630.3H753.7ZM733.7 624.4H734.7V630.7H733.7ZM750.8 624.1H752.1V630.5H750.8ZM738.2 624.2H739.2V630.7H738.2ZM739.8 623.9H740.8V631.6H739.8ZM793.8 621.7H795.4V634.7H793.8ZM796.1 623.7H797.1V629.9H796.1ZM803.4 624.7H804.7V631H803.4ZM805.5 624.4H806.4V631H805.5ZM804.5 623.1H805.5V631.1H804.5ZM799.7 624.2H800.7V631.5H799.7ZM799.4 624.5H800.4V631.2H799.4ZM819.2 621.5H820.8V633.6H819.2ZM821.5 623.7H822.5V629.9H821.5ZM807.2 623.5H809.2V631.5H807.2ZM828.1 624.5H829.1V631.1H828.1ZM813.4 624.3H814.4V631.1H813.4ZM817.5 623.6H818.8V631.5H817.5ZM820.6 623.1H821.5V631.5H820.6ZM823.9 624.3H824.8V631.1H823.9ZM844.7 621.5H846.3V633.4H844.7ZM847 623.7H848V629.9H847ZM832.7 623.5H834.7V631.5H832.7ZM854.7 624.6H855.6V631.5H854.7ZM847.9 624.2H849.2V630.4H847.9ZM836.9 624.2H837.8V631.3H836.9ZM838.8 623.5H839.7V630H838.8ZM856.2 624.6H857.5V630.7H856.2ZM870.1 621.6H871.7V634.8H870.1ZM872.4 623.7H873.4V629.9H872.4ZM858.1 623.5H860.1V631.5H858.1ZM871.2 624.4H872.5V630.9H871.2ZM880 624.2H880.9V630.8H880ZM871.5 623.9H872.8V631.4H871.5ZM881.6 623.5H882.9V630.9H881.6ZM877.2 624.4H878.1V631H877.2ZM895.6 621.2H897.2V634.2H895.6ZM897.9 623.7H898.9V629.9H897.9ZM883.6 623.5H885.6V631.5H883.6ZM891.4 623.6H892.4V631.2H891.4ZM896.4 624.3H897.4V630.9H896.4ZM891.5 624.4H892.4V631.6H891.5ZM898.2 623.3H899.1V630.2H898.2ZM898.9 623.7H900.2V631.4H898.9ZM921 621.5H922.6V633.7H921ZM923.3 623.7H924.3V629.9H923.3ZM909 623.5H911V631.5H909ZM928.5 624.6H929.8V631.5H928.5ZM925.1 623.8H926.4V631.2H925.1ZM914.4 624.2H915.4V630H914.4ZM928.9 623.5H930.2V631.3H928.9ZM922 623.7H923V630.8H922ZM946.4 621.7H948V633.6H946.4ZM948.7 623.7H949.7V629.9H948.7ZM934.4 623.5H936.4V631.5H934.4ZM951.6 623.4H952.5V631.3H951.6ZM943.5 624H944.8V631.2H943.5ZM957.6 624.6H958.9V630.8H957.6ZM957.9 624.5H959.2V630.7H957.9ZM957.9 624.7H959.2V630.6H957.9ZM971.9 621.9H973.5V633.9H971.9ZM974.2 623.7H975.2V629.9H974.2ZM959.9 623.5H961.9V631.5H959.9ZM968.6 624H969.5V630H968.6ZM976.8 623.6H978.1V631.7H976.8ZM967.1 624.3H968V630.9H967.1ZM971.2 624.6H972.2V630.3H971.2ZM969.4 623.1H970.3V631H969.4ZM997.3 621.9H998.9V634.2H997.3ZM999.6 623.7H1000.6V629.9H999.6ZM985.3 623.5H987.3V631.5H985.3ZM1009 623.5H1010.3V630.9H1009ZM1007.5 624.4H1008.4V631.4H1007.5ZM995.8 623.4H996.8V630.3H995.8ZM992.9 623.4H993.9V631.3H992.9ZM992 624.4H993V630.7H992ZM1022.8 621.4H1024.4V634.1H1022.8ZM1025.1 623.7H1026.1V629.9H1025.1ZM1010.8 623.5H1012.8V631.5H1010.8ZM1026.5 624.4H1027.8V630.8H1026.5ZM1021.3 624.6H1022.3V631.1H1021.3ZM1033.5 623.7H1034.8V630.8H1033.5ZM1018.7 624.1H1020V631.6H1018.7ZM1017.7 624.5H1019V630H1017.7ZM1048.2 620.8H1049.8V633.9H1048.2ZM1050.5 623.7H1051.5V629.9H1050.5ZM1036.2 623.5H1038.2V631.5H1036.2ZM1055 623.5H1055.9V631.5H1055ZM1060 623.4H1061V630.7H1060ZM1045.5 623.5H1046.4V630.8H1045.5ZM1045 623.7H1045.9V630.8H1045ZM1041.7 623.7H1042.7V630H1041.7ZM1073.6 621.5H1075.2V634.1H1073.6ZM1075.9 623.7H1076.9V629.9H1075.9ZM1061.6 623.5H1063.6V631.5H1061.6ZM1078.9 623.9H1079.9V630.9H1078.9ZM1079.5 623.6H1080.4V630.2H1079.5ZM1081.9 623.8H1082.8V630.7H1081.9ZM1072.2 623.3H1073.2V630.3H1072.2ZM1071.9 623.7H1072.8V630.2H1071.9ZM1099.1 621.1H1100.7V634.1H1099.1ZM1101.4 623.7H1102.4V629.9H1101.4ZM1087.1 623.5H1089.1V631.5H1087.1ZM1089.6 623.5H1090.9V631.2H1089.6ZM1103.8 623.2H1105.1V630.3H1103.8ZM1097 624.5H1098V631.3H1097ZM1094.4 623.7H1095.4V630.1H1094.4ZM1092 623.9H1093V630.8H1092ZM1124.5 621.7H1126.1V634.4H1124.5ZM1126.8 623.7H1127.8V629.9H1126.8ZM1112.5 623.5H1114.5V631.5H1112.5ZM1119.6 623.2H1120.5V630.3H1119.6ZM1122.4 623.6H1123.7V630.8H1122.4ZM1122.2 624H1123.5V630.2H1122.2ZM1120.3 623.3H1121.2V630.5H1120.3ZM1134.2 624.5H1135.2V631.5H1134.2ZM1150 621.7H1151.6V633.9H1150ZM1152.3 623.7H1153.3V629.9H1152.3ZM1138 623.5H1140V631.5H1138ZM1158.5 624.2H1159.5V631.2H1158.5ZM1141.8 624.6H1142.8V630.5H1141.8ZM1152.4 624.3H1153.3V631.1H1152.4ZM1154.1 624.1H1155.1V630.5H1154.1ZM1140.9 623.6H1141.8V630.3H1140.9ZM1175.4 621.2H1177V634.3H1175.4ZM1177.7 623.7H1178.7V629.9H1177.7ZM1163.4 623.5H1165.4V631.5H1163.4ZM1174.5 624H1175.5V630.4H1174.5ZM1184.6 624.1H1185.5V631.5H1184.6ZM1183 623.6H1184V630.4H1183ZM1173.4 623.1H1174.3V630.2H1173.4ZM1171.5 624.3H1172.8V630.3H1171.5ZM1200.8 622.1H1202.4V634.2H1200.8ZM1203.1 623.7H1204.1V629.9H1203.1ZM1188.8 623.5H1190.8V631.5H1188.8ZM1199.6 624.3H1200.9V630.8H1199.6ZM1207.6 624.6H1208.9V631.4H1207.6ZM1212 624.2H1212.9V630.5H1212ZM1197.9 623.6H1199.2V631.2H1197.9ZM1194.5 624.4H1195.5V630.2H1194.5ZM1226.3 621.2H1227.9V634.1H1226.3ZM1228.6 623.7H1229.6V629.9H1228.6ZM1214.3 623.5H1216.3V631.5H1214.3ZM1228.7 624.1H1230V630.4H1228.7ZM1230.9 623.9H1231.9V631.1H1230.9ZM1223.6 624.4H1224.5V630.8H1223.6ZM1235.4 623.1H1236.7V631.4H1235.4ZM1223.2 623.3H1224.5V630.8H1223.2ZM1251.7 621.4H1253.3V633.6H1251.7ZM1254 623.7H1255V629.9H1254ZM1239.7 623.5H1241.7V631.5H1239.7ZM1260.6 623.3H1261.6V630H1260.6ZM1250.6 623.5H1251.6V631.1H1250.6ZM1257.4 624.3H1258.4V631.2H1257.4ZM1246 623.3H1247.3V630.3H1246ZM1259.8 623.8H1261.1V630.7H1259.8ZM1277.2 621.9H1278.8V634.5H1277.2ZM1279.5 623.7H1280.5V629.9H1279.5ZM1265.2 623.5H1267.2V631.5H1265.2ZM1273.2 624.4H1274.5V630.3H1273.2ZM1281.9 624.3H1282.8V630.2H1281.9ZM1277.6 623.6H1278.5V631.3H1277.6ZM1273.2 624.3H1274.5V630.4H1273.2ZM1276 623.2H1276.9V631.7H1276ZM1302.6 621.9H1304.2V634.9H1302.6ZM1304.9 623.7H1305.9V629.9H1304.9ZM1290.6 623.5H1292.6V631.5H1290.6ZM1311.6 624.4H1312.9V630.5H1311.6ZM1314.3 624.5H1315.2V630.5H1314.3ZM1310.8 623.3H1311.7V630.2H1310.8ZM1299.5 623.4H1300.5V631.4H1299.5ZM1297.7 623.5H1298.6V630.6H1297.7ZM1328 620.7H1329.6V633.9H1328ZM1330.3 623.7H1331.3V629.9H1330.3ZM1316 623.5H1318V631.5H1316ZM1333.3 623.8H1334.2V631.3H1333.3ZM1327.8 623.4H1328.8V630.9H1327.8ZM1337.3 624H1338.2V630.2H1337.3ZM1324.1 623.8H1325.1V630.4H1324.1ZM1324.2 624.3H1325.2V630.8H1324.2ZM1353.5 621.3H1355.1V634.2H1353.5ZM1355.8 623.7H1356.8V629.9H1355.8ZM1341.5 623.5H1343.5V631.5H1341.5ZM1347 624.7H1348.3V631.3H1347ZM1345.5 624.4H1346.4V630.8H1345.5ZM1365.1 624H1366.1V630H1365.1ZM1361.1 624.1H1362.4V630H1361.1ZM1357 623.4H1357.9V630.4H1357ZM1378.9 620.8H1380.5V634.7H1378.9ZM1381.2 623.7H1382.2V629.9H1381.2ZM1366.9 623.5H1368.9V631.5H1366.9ZM1390.6 624H1391.9V631.4H1390.6ZM1370.2 623.3H1371.5V631.6H1370.2ZM1371.8 624.6H1373.1V630.5H1371.8ZM1375.9 623.9H1376.8V629.9H1375.9ZM1370.6 624.1H1371.6V631.3H1370.6ZM1404.4 621H1406V634.6H1404.4ZM1406.7 623.7H1407.7V629.9H1406.7ZM1392.4 623.5H1394.4V631.5H1392.4ZM1410.5 624.1H1411.8V631.3H1410.5ZM1396.8 623.2H1398.1V630.6H1396.8ZM1403.4 623.3H1404.3V631H1403.4Z" fill="#4f2385"/><text transform="translate(142.4 143.8) scale(0.9 1)" text-anchor="end" font-family="Liberation Sans,sans-serif" font-size="10" fill="#0b5cab" stroke="#0b5cab" stroke-width="0.28">4.0</text><text transform="translate(142.4 213.2) scale(0.9 1)" text-anchor="end" font-family="Liberation Sans,sans-serif" font-size="10" fill="#0b5cab" stroke="#0b5cab" stroke-width="0.28">2.0</text><text transform="translate(142.4 282.7) scale(0.9 1)" text-anchor="end" font-family="Liberation Sans,sans-serif" font-size="10" fill="#0b5cab" stroke="#0b5cab" stroke-width="0.28">0.0</text><text transform="translate(142.4 352.1) scale(0.9 1)" text-anchor="end" font-family="Liberation Sans,sans-serif" font-size="10" fill="#0b5cab" stroke="#0b5cab" stroke-width="0.28">-2.0</text><text transform="translate(142.4 421.6) scale(0.9 1)" text-anchor="end" font-family="Liberation Sans,sans-serif" font-size="10" fill="#0b5cab" stroke="#0b5cab" stroke-width="0.28">-4.0</text><text transform="translate(142.4 491) scale(0.9 1)" text-anchor="end" font-family="Liberation Sans,sans-serif" font-size="10" fill="#0b5cab" stroke="#0b5cab" stroke-width="0.28">-6.0</text><text transform="translate(142.4 560.5) scale(0.9 1)" text-anchor="end" font-family="Liberation Sans,sans-serif" font-size="10" fill="#0b5cab" stroke="#0b5cab" stroke-width="0.28">-8.0</text><text transform="translate(142.4 629.9) scale(0.9 1)" text-anchor="end" font-family="Liberation Sans,sans-serif" font-size="10" fill="#0b5cab" stroke="#0b5cab" stroke-width="0.28">-10.0</text><text transform="translate(139.3 86.8) scale(0.9 1)" text-anchor="middle" font-family="Liberation Sans,sans-serif" font-size="9" fill="#0b5cab" stroke="#0b5cab" stroke-width="0.28">V</text><text transform="translate(1415.2 282.7) scale(0.9 1)" font-family="Liberation Sans,sans-serif" font-size="10" fill="#75399a" stroke="#75399a" stroke-width="0.28">10.0</text><text transform="translate(1415.2 352.1) scale(0.9 1)" font-family="Liberation Sans,sans-serif" font-size="10" fill="#75399a" stroke="#75399a" stroke-width="0.28">8.0</text><text transform="translate(1415.2 421.6) scale(0.9 1)" font-family="Liberation Sans,sans-serif" font-size="10" fill="#75399a" stroke="#75399a" stroke-width="0.28">6.0</text><text transform="translate(1415.2 491) scale(0.9 1)" font-family="Liberation Sans,sans-serif" font-size="10" fill="#75399a" stroke="#75399a" stroke-width="0.28">4.0</text><text transform="translate(1415.2 560.5) scale(0.9 1)" font-family="Liberation Sans,sans-serif" font-size="10" fill="#75399a" stroke="#75399a" stroke-width="0.28">2.0</text><text transform="translate(1415.2 629.9) scale(0.9 1)" font-family="Liberation Sans,sans-serif" font-size="10" fill="#75399a" stroke="#75399a" stroke-width="0.28">0.0</text><text transform="translate(1415.2 699.4) scale(0.9 1)" font-family="Liberation Sans,sans-serif" font-size="10" fill="#75399a" stroke="#75399a" stroke-width="0.28">-2.0</text><text transform="translate(1415.2 768.8) scale(0.9 1)" font-family="Liberation Sans,sans-serif" font-size="10" fill="#75399a" stroke="#75399a" stroke-width="0.28">-4.0</text><text transform="translate(1415.8 269.2) scale(0.9 1)" font-family="Liberation Sans,sans-serif" font-size="9" fill="#75399a" stroke="#75399a" stroke-width="0.28">V</text><text transform="translate(200 777.2) scale(0.9 1)" font-family="Liberation Sans,sans-serif" font-size="10" fill="#262626" stroke="#262626" stroke-width="0.28">85.0 µs</text><text transform="translate(237.6 777.2) scale(0.9 1)" font-family="Liberation Sans,sans-serif" font-size="10" fill="#d8232a" stroke="#d8232a" stroke-width="0.28">+17.0 ms</text><text transform="translate(368.1 777.2) scale(0.9 1)" text-anchor="middle" font-family="Liberation Sans,sans-serif" font-size="10" fill="#262626" stroke="#262626" stroke-width="0.28">90.0</text><text transform="translate(527.1 777.2) scale(0.9 1)" text-anchor="middle" font-family="Liberation Sans,sans-serif" font-size="10" fill="#262626" stroke="#262626" stroke-width="0.28">95.0</text><text transform="translate(686.2 777.2) scale(0.9 1)" text-anchor="middle" font-family="Liberation Sans,sans-serif" font-size="10" fill="#262626" stroke="#262626" stroke-width="0.28">100.0</text><text transform="translate(845.3 777.2) scale(0.9 1)" text-anchor="middle" font-family="Liberation Sans,sans-serif" font-size="10" fill="#262626" stroke="#262626" stroke-width="0.28">105.0</text><text transform="translate(1004.3 777.2) scale(0.9 1)" text-anchor="middle" font-family="Liberation Sans,sans-serif" font-size="10" fill="#262626" stroke="#262626" stroke-width="0.28">110.0</text><text transform="translate(1163.4 777.2) scale(0.9 1)" text-anchor="middle" font-family="Liberation Sans,sans-serif" font-size="10" fill="#262626" stroke="#262626" stroke-width="0.28">115.0</text><text transform="translate(1322.5 777.2) scale(0.9 1)" text-anchor="middle" font-family="Liberation Sans,sans-serif" font-size="10" fill="#262626" stroke="#262626" stroke-width="0.28">120.0</text><path d="M143 65.4L148.4 70.9L143 76.4Z" fill="#0b5cab"/><rect x="118.3" y="65.6" width="25" height="10.7" rx="2.5" fill="#fff" stroke="#2a70b8" stroke-width="1.2"/><text transform="translate(142.2 74) scale(0.88 1)" text-anchor="end" font-family="Liberation Sans,sans-serif" font-size="10" fill="#0b5cab" stroke="#0b5cab" stroke-width="0.28">6.0</text><path d="M1409 71L1414.5 65.6V76.4Z" fill="#6a2c91"/><path d="M1414.5 65.6H1436Q1438.6 65.6 1438.6 68V74Q1438.6 76.4 1436 76.4H1414.5Z" fill="#fff" stroke="#6a2c91" stroke-width="1.2"/><path d="M138.3 522L142.6 518.2V525.8Z" fill="#f2c024"/><path d="M142.6 518.2L138.3 522L142.6 525.8" fill="none" stroke="#4a4ad8" stroke-width="0.9"/><circle cx="205.5" cy="731" r="9.6" fill="#1478d2"/><path d="M207.7 726L202.7 731L207.7 736" fill="none" stroke="#fff" stroke-width="2.4"/><circle cx="1351.5" cy="731" r="9.6" fill="#1478d2"/><path d="M1349.3 726L1354.3 731L1349.3 736" fill="none" stroke="#fff" stroke-width="2.4"/><path d="M757.3 80V761" stroke="#222" stroke-width="1.15" stroke-dasharray="14.2 3.8" stroke-dashoffset="0" fill="none"/><path d="M783.3 80V761" stroke="#222" stroke-width="1.15" stroke-dasharray="14.2 3.8" stroke-dashoffset="0" fill="none"/><path d="M756.0 767Q756.0 764.8 758.3 764.8H778.6999999999999L783.3 760L787.9 764.8H807.3Q809.5999999999999 764.8 809.5999999999999 767V781H756.0Z" fill="#0b5cab"/><text transform="translate(782.3 777.2) scale(0.9 1)" text-anchor="middle" font-family="Liberation Sans,sans-serif" font-size="10" fill="#fff" stroke="#fff" stroke-width="0.28">17103.0 µs</text><path d="M730.0 767Q730.0 764.8 732.3 764.8H752.6999999999999L757.3 760L761.9 764.8H781.3Q783.5999999999999 764.8 783.5999999999999 767V781H730.0Z" fill="#0b5cab"/><text transform="translate(756.3 777.2) scale(0.9 1)" text-anchor="middle" font-family="Liberation Sans,sans-serif" font-size="10" fill="#fff" stroke="#fff" stroke-width="0.28">17102.2 µs</text></svg>
<div id="title" class="abs"><div class="t">PicoScope 7 T&amp;M</div><svg style="left:1.4px;top:2.1px" width="12.4" height="12" viewBox="0 0 12.4 12"><rect width="12.4" height="12" fill="#eef5fc"/><path d="M1 0H12.4V2.6L9.5 1.8L7.5 3.4L5 1.6L2.8 3.8L1 2.6Z" fill="#5a9ee0"/><path d="M6.6 4.2L8.6 3.6L9.4 5.4L7.6 6.2Z" fill="#7ab2e6"/><path d="M0.8 12L12.4 5V12Z" fill="#0c2f63"/><path d="M0 0H0.9V12H0Z" fill="#f6d9c2"/><path d="M1.6 9.6L5.4 6.4L6.6 7.6" stroke="#8aa0c0" stroke-width="0.8" fill="none"/><path d="M7 9.6H11M7.4 10.8H11.4" stroke="#5f7fae" stroke-width="0.6"/><path d="M4 11.7H11.6" stroke="#d8e4f4" stroke-width="0.5"/></svg><svg style="left:1340px;top:0" width="100" height="17" viewBox="0 0 100 17"><path d="M9.5 8H17" stroke="#fff" stroke-width="1"/><rect x="43.5" y="5.5" width="5.5" height="5.5" rx="1" fill="none" stroke="#fff" stroke-width="0.9"/><path d="M45.5 5.5V4.8Q45.5 3.8 46.5 3.8H50Q51 3.8 51 4.8V8.3Q51 9.3 50 9.3H49" fill="none" stroke="#fff" stroke-width="0.9"/><path d="M77.5 4L85 11.5M85 4L77.5 11.5" stroke="#fff" stroke-width="1.25"/></svg></div><div class="abs" style="left:0;top:17.6px;width:1440px;height:1.7px;background:#fcfcfa"></div>
<div class="tx" style="left:1344.5px;top:16.5px;font-family:'Liberation Serif',serif;font-size:25px;color:#7b7b7b;-webkit-text-stroke:0.25px #7b7b7b;transform-origin:0 0;transform:scale(2.0,1);letter-spacing:0px">pico</div><div class="tx" style="left:1379px;top:50.5px;font-family:'Liberation Serif',serif;font-size:9.3px;color:#969696">Technology</div><div class="tx" style="left:1427px;top:23px;font-size:3.5px;color:#999">®</div><svg style="left:0;top:0" width="1440" height="64" viewBox="0 0 1440 64"><defs><linearGradient id="wg" gradientUnits="userSpaceOnUse" x1="1342" y1="0" x2="1430" y2="0"><stop offset="0" stop-color="#d4e6f4"/><stop offset="0.45" stop-color="#a9cbe8"/><stop offset="0.7" stop-color="#6f9fcd"/><stop offset="1" stop-color="#3f70a8"/></linearGradient></defs><path d="M1342 50.8H1346C1353 50.8 1357 40.4 1364 40.4H1371C1378 40.4 1385 50.8 1392 50.8C1396 50.8 1400 46 1407 40.4M1345.3 50.8H1349.3C1356.3 50.8 1360.3 40.4 1367.3 40.4H1374.3C1381.3 40.4 1388.3 50.8 1395.3 50.8C1399.3 50.8 1403.3 46 1410.3 40.4M1348.6 50.8H1352.6C1359.6 50.8 1363.6 40.4 1370.6 40.4H1377.6C1384.6 40.4 1391.6 50.8 1398.6 50.8C1402.6 50.8 1406.6 46 1413.6 40.4M1351.9 50.8H1355.9C1362.9 50.8 1366.9 40.4 1373.9 40.4H1380.9C1387.9 40.4 1394.9 50.8 1401.9 50.8C1405.9 50.8 1409.9 46 1416.9 40.4M1355.2 50.8H1359.2C1366.2 50.8 1370.2 40.4 1377.2 40.4H1384.2C1391.2 40.4 1398.2 50.8 1405.2 50.8C1409.2 50.8 1413.2 46 1420.2 40.4M1358.5 50.8H1362.5C1369.5 50.8 1373.5 40.4 1380.5 40.4H1387.5C1394.5 40.4 1401.5 50.8 1408.5 50.8C1412.5 50.8 1416.5 46 1423.5 40.4M1361.8 50.8H1365.8C1372.8 50.8 1376.8 40.4 1383.8 40.4H1390.8C1397.8 40.4 1404.8 50.8 1411.8 50.8C1415.8 50.8 1419.8 46 1426.8 40.4M1365.1 50.8H1369.1C1376.1 50.8 1380.1 40.4 1387.1 40.4H1394.1C1401.1 40.4 1408.1 50.8 1415.1 50.8C1419.1 50.8 1423.1 46 1430.1 40.4" fill="none" stroke="url(#wg)" stroke-width="0.55"/></svg>
<div class="blk" style="left:7.4px;top:20px;width:103.8px;height:39.5px;border:1px solid #e2464b;border-radius:5px"><div class="abs" style="left:0;top:0;bottom:0;width:14px;background:#c80000"></div><div class="tx" style="left:14px;right:0;text-align:center;top:15.8px;font-size:9px;color:#d0202a">Stopped</div></div>
<div class="blk" style="left:118.7px;top:20.1px;width:130.9px;height:38.8px"><div class="btn l g"><i class="h"></i></div><div class="btn r g"><i class="h"></i><i class="v"></i></div><div class="tx" style="left:18.5px;top:3.5px;font-size:8.6px;color:#a9a9a9">Timebase</div><div class="tx" style="left:18.5px;top:23.5px;font-size:11px;color:#b9b9b9">20 ms/div</div><div class="tx" style="right:18px;top:2.5px;font-size:6.8px;color:#8c8c8c">Samples</div><div class="tx" style="right:18px;top:11.5px;font-size:6.8px;color:#bdbdbd">1 GS</div><div class="tx" style="right:18px;top:20.5px;font-size:6.8px;color:#8c8c8c">Sample rate</div><div class="tx" style="right:18px;top:29.5px;font-size:6.8px;color:#cfcfcf">5 GS/s</div></div>
<div class="blk" style="left:257.4px;top:20.1px;width:123.6px;height:38.8px"><div class="btn l"><i class="h"></i></div><div class="btn r" style="width:15.2px"><i class="h"></i><i class="v"></i></div><div class="tx" style="left:19px;top:3px;font-size:8.8px;color:#414b5e">Trigger</div><div class="tx sb" style="left:19px;top:28px;font-size:10.2px;color:#0b4f94">3 V</div><div class="tx" style="right:34px;top:2.8px;font-size:6.2px;color:#5b2d8e">E</div><svg style="right:19.5px;top:1.6px" width="11" height="7" viewBox="0 0 11 7"><path d="M0 0.6H2.2V6.2H7.4V0.6H10.4V2.2" fill="none" stroke="#0b4f94" stroke-width="1"/><path d="" stroke="#0b4f94"/></svg><div class="tx" style="right:19px;top:12.5px;font-size:6.8px;color:#414b5e">20 %</div><div class="tx" style="right:19px;top:22px;font-size:6.8px;color:#414b5e">Pulse width</div><div class="tx" style="right:19px;top:31.5px;font-size:6.8px;color:#414b5e">Single</div></div>
<div class="blk" style="left:388px;top:20.5px;width:90px;height:38.6px"><div class="btn l g"><i class="h"></i></div><div class="btn r g"><i class="h"></i><i class="v"></i></div><div class="tx" style="left:0;right:0;text-align:center;top:4px;font-size:8.8px;color:#414b5e">Waveform</div><div class="tx sb" style="left:0;right:0;text-align:center;top:15.5px;font-size:10.5px;color:#0b4f94">1</div><div class="tx" style="left:0;right:0;text-align:center;top:30.5px;font-size:6.8px;color:#0b4f94">of 1</div></div>
<div class="blk" style="left:486px;top:20.8px;width:90px;height:38.4px"><div class="btn l g"><i class="h"></i></div><div class="btn r g"><i class="h"></i><i class="v"></i></div><div class="tx" style="left:0;right:0;text-align:center;top:1.5px;font-size:8.8px;color:#414b5e">Hardware</div><div class="tx" style="left:0;right:0;text-align:center;top:13.5px;font-size:8.8px;color:#414b5e">resolution</div><div class="tx sb" style="left:0;right:0;text-align:center;top:27px;font-size:9px;color:#0b4f94">8 bits</div></div>
<svg style="left:587.9px;top:22.1px" width="40" height="17" viewBox="0 0 40 17"><rect x="0.85" y="0.85" width="10.2" height="14.9" fill="#fff" stroke="#0b5cab" stroke-width="1.7"/><rect x="14.75" y="0.85" width="10.2" height="14.9" fill="#fff" stroke="#0b5cab" stroke-width="1.7"/><rect x="28.05" y="0.85" width="10.2" height="14.9" fill="#fff" stroke="#0b5cab" stroke-width="1.7"/><path d="M2.6 11C3.6 14 4.6 13 5.6 8.5S7.6 2.5 9.2 5.5" fill="none" stroke="#0b5cab" stroke-width="1.2"/><path d="M17.3 3.5V12.3H23.3M19.6 12V7.5M21.6 12V9.5" fill="none" stroke="#0b5cab" stroke-width="1.2"/><ellipse cx="33.2" cy="8.3" rx="1.8" ry="4.6" transform="rotate(28 33.2 8.3)" fill="none" stroke="#0b5cab" stroke-width="1.2"/></svg>
<div class="lab" style="left:607.5px;top:45px;color:#0b4f94;font-size:6.9px">Instruments</div>
<svg style="left:647.5px;top:22px" width="16" height="18" viewBox="0 0 16 18"><path d="M1.2 13.2L11 4.2L14.3 7.8L4.5 16.8Z" fill="#a6a6a6"/><path d="M10.2 6.6L11.6 5.3L13.2 7L11.8 8.3Z" fill="#fff"/><path d="M7 0.5L9.4 3.4M9.4 0.5L7 3.4M8.2 0V3.9M11.6 12.5L14 15.4M14 12.5L11.6 15.4M12.8 12V15.9" stroke="#a6a6a6" stroke-width="0.6"/></svg>
<div class="lab" style="left:655.3px;top:45px;color:#a9a9a9;font-size:6.9px">Auto setup</div>
<svg style="left:692.9px;top:22px" width="22" height="17" viewBox="0 0 22 17"><path d="M0 0.6Q0 0 0.6 0H8.2L10 2H16.6Q17.3 2 17.3 2.7V5.6H5.2L0 15.5Z" fill="#0b5cab"/><path d="M5.9 6.6H21.1L16.6 16.7H0.6Z" fill="#0b5cab"/></svg>
<div class="lab" style="left:703.5px;top:45px;color:#0b4f94;font-size:6.9px">Open</div>
<svg style="left:743px;top:22px" width="17" height="17" viewBox="0 0 17 17"><path d="M0 0.8Q0 0 0.8 0H12.8L16.8 4V16Q16.8 16.8 16 16.8H0.8Q0 16.8 0 16Z" fill="#0b5cab"/><rect x="3.6" y="2.4" width="8.4" height="2.3" fill="#fff"/><circle cx="8.4" cy="11" r="2.3" fill="#fff"/></svg>
<div class="lab" style="left:751.5px;top:45px;color:#0b4f94;font-size:6.9px">Save</div>
<svg style="left:790.8px;top:22px" width="18" height="17" viewBox="0 0 18 17"><rect x="3.7" y="0.3" width="10.4" height="2.6" fill="#0b5cab"/><rect x="0" y="4.3" width="17.7" height="9" rx="1.8" fill="#0b5cab"/><rect x="4.3" y="10.3" width="9.2" height="5.9" fill="#fff" stroke="#0b5cab" stroke-width="1.2"/><circle cx="15" cy="6.8" r="0.8" fill="#fff"/></svg>
<div class="lab" style="left:799.5px;top:45px;color:#0b4f94;font-size:6.9px">Print</div>
<svg style="left:838.5px;top:22px" width="18" height="17" viewBox="0 0 18 17"><rect x="0.8" y="0.8" width="16.4" height="15.2" rx="2" fill="none" stroke="#0b5cab" stroke-width="1.6"/><path d="M7.0 7.0L3.4 3.4M6.6 3.4H3.4V6.6M11.0 7.0L14.6 3.4M11.399999999999999 3.4H14.6V6.6M7.0 9.8L3.4 13.4M6.6 13.4H3.4V10.2M11.0 9.8L14.6 13.4M11.399999999999999 13.4H14.6V10.2" fill="none" stroke="#0b5cab" stroke-width="1.1"/></svg>
<div class="lab" style="left:847.5px;top:45px;color:#0b4f94;font-size:6.9px">Full</div>
<div class="blk lp" style="left:7.4px;top:62.5px;width:103.8px;height:38.3px"><div class="btn l"><i class="h"></i></div><div class="btn r"><i class="h"></i><i class="v"></i></div><div class="tx sb" style="left:17px;top:4.5px;font-size:8.6px;color:#0b4f94">A</div><div class="tx sb" style="left:17px;top:27px;font-size:10.3px;color:#0b4f94">±10 V</div><div class="tx" style="right:16.5px;top:3.5px;font-size:6.8px;color:#414b5e">DC</div><div class="tx" style="right:16.5px;top:12.5px;font-size:6.8px;color:#414b5e">x10</div></div>
<div class="blk lp" style="left:7.4px;top:104.5px;width:103.8px;height:38.3px"><div class="btn l"><i class="h"></i></div><div class="btn r"><i class="h"></i><i class="v"></i></div><div class="tx sb" style="left:17px;top:4.5px;font-size:8.6px;color:#e0103a">B</div><div class="tx sb" style="left:17px;top:27px;font-size:10.3px;color:#e0103a">Off</div><div class="tx" style="right:16.5px;top:3.5px;font-size:6.8px;color:#414b5e">DC</div><div class="tx" style="right:16.5px;top:12.5px;font-size:6.8px;color:#414b5e">x10</div><div class="tx" style="right:16.5px;top:21.5px;font-size:6.8px;color:#414b5e">Filtered</div></div>
<div class="blk lp" style="left:7.4px;top:146.5px;width:103.8px;height:38.3px"><div class="btn l"><i class="h"></i></div><div class="btn r"><i class="h"></i><i class="v"></i></div><div class="tx sb" style="left:17px;top:4.5px;font-size:8.6px;color:#1a8a2a">C</div><div class="tx sb" style="left:17px;top:27px;font-size:10.3px;color:#1a8a2a">Off</div><div class="tx" style="right:16.5px;top:3.5px;font-size:6.8px;color:#414b5e">DC</div><div class="tx" style="right:16.5px;top:12.5px;font-size:6.8px;color:#414b5e">x1</div></div>
<div class="blk lp" style="left:7.4px;top:188.5px;width:103.8px;height:38.3px"><div class="btn l"><i class="h"></i></div><div class="btn r"><i class="h"></i><i class="v"></i></div><div class="tx sb" style="left:17px;top:4.5px;font-size:8.6px;color:#dba520">D</div><div class="tx sb" style="left:17px;top:27px;font-size:10.3px;color:#dba520">Off</div><div class="tx" style="right:16.5px;top:3.5px;font-size:6.8px;color:#414b5e">DC</div><div class="tx" style="right:16.5px;top:12.5px;font-size:6.8px;color:#414b5e">x1</div></div>
<div class="blk lp" style="left:7.4px;top:230.5px;width:103.8px;height:38.3px"><div class="btn l"><i class="h"></i></div><div class="btn r"><i class="h"></i><i class="v"></i></div><div class="tx sb" style="left:17px;top:4.5px;font-size:8.6px;color:#5b2080">E</div><div class="tx sb" style="left:17px;top:27px;font-size:10.3px;color:#5b2080">±10 V</div><div class="tx" style="right:16.5px;top:3.5px;font-size:6.8px;color:#414b5e">DC</div><div class="tx" style="right:16.5px;top:12.5px;font-size:6.8px;color:#414b5e">x10</div></div>
<div class="blk lp" style="left:7.4px;top:272.5px;width:103.8px;height:38.3px"><div class="btn l"><i class="h"></i></div><div class="btn r"><i class="h"></i><i class="v"></i></div><div class="tx sb" style="left:17px;top:4.5px;font-size:8.6px;color:#8a8a8a">F</div><div class="tx sb" style="left:17px;top:27px;font-size:10.3px;color:#8a8a8a">Off</div><div class="tx" style="right:16.5px;top:3.5px;font-size:6.8px;color:#414b5e">DC</div><div class="tx" style="right:16.5px;top:12.5px;font-size:6.8px;color:#414b5e">x1</div></div>
<div class="blk lp" style="left:7.4px;top:314.5px;width:103.8px;height:38.3px"><div class="btn l"><i class="h"></i></div><div class="btn r"><i class="h"></i><i class="v"></i></div><div class="tx sb" style="left:17px;top:4.5px;font-size:8.6px;color:#2a9ad6">G</div><div class="tx sb" style="left:17px;top:27px;font-size:10.3px;color:#2a9ad6">Off</div><div class="tx" style="right:16.5px;top:3.5px;font-size:6.8px;color:#414b5e">DC</div><div class="tx" style="right:16.5px;top:12.5px;font-size:6.8px;color:#414b5e">x10</div></div>
<div class="blk lp" style="left:7.4px;top:356.5px;width:103.8px;height:38.3px"><div class="btn l"><i class="h"></i></div><div class="btn r"><i class="h"></i><i class="v"></i></div><div class="tx sb" style="left:17px;top:4.5px;font-size:8.6px;color:#b0105a">H</div><div class="tx sb" style="left:17px;top:27px;font-size:10.3px;color:#b0105a">Off</div><div class="tx" style="right:16.5px;top:3.5px;font-size:6.8px;color:#414b5e">DC</div><div class="tx" style="right:16.5px;top:12.5px;font-size:6.8px;color:#414b5e">x1</div></div>
<div class="blk lp" style="left:7.4px;top:399.0px;width:103.8px;height:16.3px"><div class="btn l"><i class="h"></i></div><div class="btn r"><i class="h"></i><i class="v"></i></div><div class="tx" style="left:17px;top:4.7px;font-size:8.8px;color:#0b4f94">1D7-1D0</div><div class="tx" style="right:16.5px;top:4.7px;font-size:8.8px;color:#0b4f94">Off</div></div>
<div class="blk lp" style="left:7.4px;top:419.2px;width:103.8px;height:16.3px"><div class="btn l"><i class="h"></i></div><div class="btn r"><i class="h"></i><i class="v"></i></div><div class="tx" style="left:17px;top:4.7px;font-size:8.8px;color:#0b4f94">2D7-2D0</div><div class="tx" style="right:16.5px;top:4.7px;font-size:8.8px;color:#0b4f94">Off</div></div>
<div class="blk lp" style="left:7.4px;top:439.7px;width:103.8px;height:38px"><div class="abs" style="left:0;top:0;width:103.8px;height:18.6px"><div class="btn l g"><i class="h"></i></div><div class="btn r g"><i class="h"></i><i class="v"></i></div><div class="tx" style="left:19.5px;top:5.5px;font-size:8.8px;color:#414b5e">Gen</div><div class="tx" style="right:19px;top:5.5px;font-size:8.8px;color:#414b5e">6 MHz</div></div><div class="abs" style="left:0;top:19.4px;width:103.8px;height:18.6px"><div class="btn l g"><i class="h"></i></div><div class="btn r g"><i class="h"></i><i class="v"></i></div><svg style="left:20px;top:3.5px" width="19" height="11" viewBox="0 0 19 11"><path d="M0.5 5.5L5 1L13.5 10L18.5 5" fill="none" stroke="#0b4f94" stroke-width="1"/></svg><div class="tx" style="right:19px;top:5.5px;font-size:8.8px;color:#414b5e">700 mV</div></div></div>
<div class="blk lp" style="left:7.4px;top:481.1px;width:103.8px;height:16.7px;border:1px solid #a3c8ee;border-radius:4.5px"><svg style="left:7px;top:3.4px" width="11" height="9" viewBox="0 0 11 9"><path d="M0.2 0.7H3.2C5 0.7 6 5 7.8 5H10.8M0.2 5H3.2C5 5 6 0.7 7.8 0.7H10.8" fill="none" stroke="#0b4f94" stroke-width="1.1"/><path d="M1.6 6.4V8.8M3.2 6.4V8.8M5 6.4H6.2V8.8H5ZM7.8 6.4V8.8M9.2 6.4V8.8" fill="none" stroke="#7f9fc4" stroke-width="0.6"/></svg><div class="tx sb" style="left:21.4px;top:3.5999999999999996px;font-size:8.5px;color:#0b4f94">I2C</div><div class="abs" style="right:0;top:0;bottom:0;width:14.2px;background:#96c1eb"><svg style="left:2.8px;top:2.5px" width="9" height="11" viewBox="0 0 9 11"><path d="M0.3 1.8H8.7M3 1.5V0.5H6V1.5" fill="none" stroke="#fff" stroke-width="1"/><path d="M1 3H8L7.3 10.5H1.7Z" fill="#fff"/><path d="M3 4.3V9.3M4.5 4.3V9.3M6 4.3V9.3" stroke="#96c1eb" stroke-width="0.6"/></svg></div></div>
<div class="blk lp" style="left:7.4px;top:502.1px;width:103.8px;height:16.7px;border:1px solid #a3c8ee;border-radius:4.5px"><svg style="left:7px;top:3.4px" width="11" height="9" viewBox="0 0 11 9"><path d="M0.2 0.7H3.2C5 0.7 6 5 7.8 5H10.8M0.2 5H3.2C5 5 6 0.7 7.8 0.7H10.8" fill="none" stroke="#0b4f94" stroke-width="1.1"/><path d="M1.6 6.4V8.8M3.2 6.4V8.8M5 6.4H6.2V8.8H5ZM7.8 6.4V8.8M9.2 6.4V8.8" fill="none" stroke="#7f9fc4" stroke-width="0.6"/></svg><div class="tx sb" style="left:21.4px;top:4.1499999999999995px;font-size:7.4px;color:#0b4f94">Manchester - Ch A</div><div class="abs" style="right:0;top:0;bottom:0;width:14.2px;background:#96c1eb"><svg style="left:2.8px;top:2.5px" width="9" height="11" viewBox="0 0 9 11"><path d="M0.3 1.8H8.7M3 1.5V0.5H6V1.5" fill="none" stroke="#fff" stroke-width="1"/><path d="M1 3H8L7.3 10.5H1.7Z" fill="#fff"/><path d="M3 4.3V9.3M4.5 4.3V9.3M6 4.3V9.3" stroke="#96c1eb" stroke-width="0.6"/></svg></div></div>
<div class="abs" style="left:9px;top:522px;width:102px;height:1px;background:#c9c9c9"></div>
<svg style="left:23.3px;top:528px" width="17" height="17" viewBox="0 0 17 17"><circle cx="2.0" cy="2.0" r="1.9" fill="#0b5cab"/><circle cx="2.0" cy="8.25" r="1.9" fill="#0b5cab"/><circle cx="2.0" cy="14.5" r="1.9" fill="#0b5cab"/><circle cx="8.2" cy="2.0" r="1.9" fill="#0b5cab"/><circle cx="8.2" cy="8.25" r="1.9" fill="#0b5cab"/><circle cx="8.2" cy="14.5" r="1.9" fill="#0b5cab"/><circle cx="14.4" cy="2.0" r="1.9" fill="#0b5cab"/><circle cx="14.4" cy="8.25" r="1.9" fill="#0b5cab"/><circle cx="14.4" cy="14.5" r="1.9" fill="#0b5cab"/></svg>
<div class="lab" style="left:31.5px;top:551px;color:#0b4f94;font-size:6.9px">More...</div>
<svg style="left:75.6px;top:527.7px" width="23" height="17" viewBox="0 0 23 17"><path d="M0.3 3.6L21.6 0.2L22.3 3.6L0.9 7.2Z" fill="#0b5cab"/><path d="M0.6 6.6H22.4V15.2Q22.4 16.8 20.8 16.8H2.2Q0.6 16.8 0.6 15.2Z" fill="#0b5cab"/><rect x="2.2" y="12" width="18.6" height="3.2" fill="#fff"/><path d="M4 10.6L6.4 7.4H8.4L6 10.6ZM10 10.6L12.4 7.4H14.4L12 10.6ZM16 10.6L18.4 7.4H20.4L18 10.6Z" fill="#fff"/><path d="M4.4 5.4L6 3.2L7.8 2.9L6.2 5.1ZM10 4.4L11.6 2.3L13.4 2L11.8 4.1ZM15.6 3.5L17.2 1.4L19 1.1L17.4 3.2Z" fill="#fff"/></svg>
<div class="lab" style="left:87px;top:551px;color:#0b4f94;font-size:6.9px">Actions</div>
<svg style="left:23.3px;top:571px" width="17" height="16" viewBox="0 0 17 16"><path d="M0.8 0.8H15.7V15.2H0.8ZM8.25 0.8V15.2M0.8 8H15.7" fill="none" stroke="#0b5cab" stroke-width="1.6"/></svg>
<div class="lab" style="left:31.5px;top:593.5px;color:#0b4f94;font-size:6.9px">Views</div>
<div class="tx" style="left:79.8px;top:569px;font-family:'Liberation Serif',serif;font-weight:bold;font-size:22.6px;color:#0b5cab;-webkit-text-stroke:0.5px #0b5cab;transform-origin:0 0;transform:scale(1.08,1)">Σ</div>
<div class="lab" style="left:87px;top:593.5px;color:#0b4f94;font-size:6.9px">Math channels</div>
<svg style="left:24px;top:612.8px" width="16" height="18" viewBox="0 0 16 18"><path d="M7.2 4.6L1 17M8.6 5.8L14.4 17M8.4 2.2L9.8 0.6" fill="none" stroke="#0b5cab" stroke-width="1.75" stroke-linecap="round"/><circle cx="7.4" cy="3.4" r="1.7" fill="#f0f0f0" stroke="#0b5cab" stroke-width="1.1"/></svg>
<div class="lab" style="left:31.5px;top:636.5px;color:#0b4f94;font-size:6.9px">Measurements</div>
<svg style="left:78px;top:612.8px" width="18" height="18" viewBox="0 0 18 18"><path d="M0.9 13.4L13.8 0.9L17.1 4.2L4.2 16.7Z" fill="none" stroke="#0b5cab" stroke-width="1.3"/><path d="M4 12.5L5.4 13.9M6 10.6L7.4 12M8 8.7L9.4 10.1M10 6.8L11.4 8.2M12 4.9L13.4 6.3" stroke="#0b5cab" stroke-width="0.8"/></svg>
<div class="lab" style="left:87px;top:636.5px;color:#0b4f94;font-size:6.9px">Rulers</div>
<svg style="left:22.3px;top:655.3px" width="19" height="18" viewBox="0 0 19 18"><path d="M0.6 4V17H15.4" fill="none" stroke="#0b5cab" stroke-width="1.2"/><rect x="3.9" y="0.6" width="13.8" height="13.2" fill="none" stroke="#0b5cab" stroke-width="1.2"/><path d="M5.6 7.6C6.4 8.6 7 10.4 7.8 10.4C9 10.4 9.6 4.8 10.6 4.8S12.4 10.2 13.4 10.2S15.4 5.8 16.4 4.8" fill="none" stroke="#0b5cab" stroke-width="1.15"/></svg>
<div class="lab" style="left:31.5px;top:675px;color:#0b4f94;font-size:6.9px">Reference<br>waveforms</div>
<svg style="left:79px;top:656px" width="16" height="17" viewBox="0 0 16 17"><path d="M12.6 3V2Q12.6 0.6 11.2 0.6H2Q0.6 0.6 0.6 2V14.4Q0.6 15.8 2 15.8H11.2Q12.6 15.8 12.6 14.4V12" fill="none" stroke="#0b5cab" stroke-width="1.2"/><path d="M12.6 5.6L15 8L7.4 15.2L4.6 15.8L5.2 13Z" fill="#0b5cab"/></svg>
<div class="lab" style="left:87px;top:679.2px;color:#0b4f94;font-size:6.9px">Notes</div>
<svg style="left:20.6px;top:698.6px" width="22" height="17" viewBox="0 0 22 17"><path d="M0.4 1.2H6.5C9.5 1.2 12 7.8 15 7.8H21.6M0.4 7.8H6.5C9.5 7.8 12 1.2 15 1.2H21.6" fill="none" stroke="#0b5cab" stroke-width="1.4"/><text x="11" y="16.4" text-anchor="middle" style="font-family:Liberation Sans,sans-serif;font-weight:bold;font-size:7.8px" fill="#0b5cab">1101</text></svg>
<div class="lab" style="left:31.5px;top:722.2px;color:#0b4f94;font-size:6.9px">Serial decoding</div>
<svg style="left:77px;top:699px" width="20" height="17" viewBox="0 0 20 17"><path d="M0 1Q0 0 1 0H19Q20 0 20 1V12Q20 13 19 13H3.6L0 16.6Z" fill="#0b5cab"/><rect x="9.2" y="5" width="1.8" height="5.8" fill="#fff"/><rect x="9.2" y="2.4" width="1.8" height="1.7" fill="#fff"/></svg>
<div class="lab" style="left:87px;top:722.2px;color:#0b4f94;font-size:6.9px">Send feedback</div>
<div class="abs" style="left:296px;top:67px;width:214.5px;height:136.8px;background:#fff;border:1px solid #96c1eb;border-radius:3px;overflow:hidden"><div class="abs" style="left:0;top:0;right:0;height:11.5px;background:#96c1eb"></div><div class="tx" style="left:1px;top:1.6px;font-size:9px;font-weight:bold;color:#fff">Zoom</div><svg style="left:0;top:0" width="213" height="135" viewBox="0 0 213 135"><path d="M179 5.8H186" stroke="#fff" stroke-width="1.1"/><rect x="191" y="3.6" width="7.8" height="4.2" fill="#fff"/><path d="M203.3 1.8L210.7 9M210.7 1.8L203.3 9" stroke="#fff" stroke-width="1.2"/><path d="M26 19H204.5M26 26H204.5M26 33H204.5M26 40H204.5M26 47H204.5M26 54H204.5M26 61H204.5M26 68H204.5M26 75H204.5M26 82H204.5M26 89H204.5M26 19V89M43.9 19V89M61.7 19V89M79.6 19V89M97.4 19V89M115.2 19V89M133.1 19V89M151 19V89M168.8 19V89M186.6 19V89M204.5 19V89" fill="none" stroke="#a9daf0" stroke-width="0.9" stroke-dasharray="1.5 1.8"/><path d="M26 26H204V42.6L201.1 42.7L198.6 42.8L195.4 43.1L193 42.9L190.6 42.7L186.9 42.7L185.1 42.7L181.8 42.6L178.4 42.9L175.2 42.6L173.5 42.6L171.1 42.8L169.6 42.9L167.1 42.7L164.2 43.2L162.2 43.1L159.9 43L158.1 43.2L155.6 43.2L153.5 42.8L150.2 42.6L148.1 43L144.2 42.7L142.2 42.8L138.3 42.6L135.2 42.8L132.1 42.6L129 43.1L125.4 42.9L122.6 42.9L120.8 43.1L117.6 42.8L114.4 42.8L112 42.7L109 42.9L106.2 42.5L103.1 42.8L100.1 42.9L96.3 42.6L93.6 43.2L90.3 42.7L87 43.2L84.5 43.1L82.6 43.2L79.9 42.7L76.3 43L72.5 43.1L69 42.9L65 42.5L61.3 43L59.2 43.1L56.5 42.9L52.9 42.6L50.7 43L49 42.9L45.5 42.8L43.4 43.1L39.8 43L36.9 43.1L33.4 42.6L31 42.6L29.4 42.7L26 43.1Z" fill="#0560ae"/><path d="M26 74.4L43 74L61.6 73.8V76.2L43 76.6L26 76.6Z" fill="#55278a"/><rect x="61.6" y="56" width="75.4" height="22.4" fill="#55278a"/><path d="M137 57L138.8 56.6L141.3 57.2L144.3 57.2L146 57.3L148 57L151.7 57.1L153.7 57L156.3 56.4L158.6 56.7L161.7 56.7L164.7 57L166.6 56.5L169.9 56.8L171.7 56.5L175.6 56.9L178 56.6L181.9 57L185.3 56.7L187.6 56.8L189.4 57L192 57.1L194.5 56.8L197.3 57.2L199.6 57L201.7 56.9L203.9 57.2L204.3 57.2V59.3H137Z" fill="#55278a"/><path d="M62.6 28.3L64.4 30.2L62.6 32.1L60.8 30.2Z" fill="#f0b323" stroke="#6a3a9a" stroke-width="0.4"/><path d="M77.6 19V89" stroke="#7a7a7a" stroke-width="1"/><path d="M73 53L75 54.8H80.4L82.4 53M73 54.8H82.4" stroke="#9a9a9a" stroke-width="0.7" fill="none"/><circle cx="12.6" cy="27.2" r="9.3" fill="#fff" stroke="#96c1eb" stroke-width="0.9"/><path d="M8.6 27.2H16.6M12.6 23.2V31.2" stroke="#0b4f94" stroke-width="1.7"/><circle cx="12.6" cy="81" r="9.3" fill="#fff" stroke="#96c1eb" stroke-width="0.9"/><path d="M8.6 81H16.6" stroke="#0b4f94" stroke-width="1.7"/><path d="M12.6 41.5V68" stroke="#dcdcdc" stroke-width="2.2" stroke-linecap="round"/><circle cx="12.6" cy="63.6" r="5" fill="#96c1eb"/><circle cx="38.2" cy="102.6" r="9.3" fill="#fff" stroke="#96c1eb" stroke-width="0.9"/><path d="M34.2 102.6H42.2" stroke="#0b4f94" stroke-width="1.7"/><circle cx="197.2" cy="102.6" r="9.3" fill="#fff" stroke="#96c1eb" stroke-width="0.9"/><path d="M193.2 102.6H201.2M197.2 98.6V106.6" stroke="#0b4f94" stroke-width="1.7"/><path d="M53 102.6H183" stroke="#dcdcdc" stroke-width="2.2" stroke-linecap="round"/><circle cx="112.3" cy="102.6" r="5" fill="#96c1eb"/><rect x="44.6" y="113.2" width="62" height="15.4" rx="2.5" fill="#fff" stroke="#96c1eb" stroke-width="1"/><path d="M76.5 113.2H104.1Q106.6 113.2 106.6 115.7V126.1Q106.6 128.6 104.1 128.6H76.5Z" fill="#0a529f"/><circle cx="57.6" cy="119.2" r="3.2" fill="none" stroke="#0b4f94" stroke-width="1.2"/><path d="M60 121.7L65.4 126.2" stroke="#0b4f94" stroke-width="1.7" stroke-linecap="round"/><path d="M56 119.2H59.2M57.6 117.6V120.8" stroke="#0b4f94" stroke-width="0.7"/><path d="M89.6 126.9L85.4 122Q84.9 120.4 86.8 120.7L88.2 122V116.1Q89.2 115 90.1 116.1V115.3Q91.2 114.1 92.3 115.3V115.7Q93.5 114.6 94.6 115.7V116.8Q95.7 115.9 96.8 117V123.5Q96.8 125.6 95.4 126.9Z" fill="#fff"/><path d="M90.1 116.3V120.4M92.3 115.7V120.4M94.6 116.1V120.4" stroke="#0a529f" stroke-width="0.5"/><path d="M127.6 123.4C130.5 117.6 138.5 116.2 142.6 124.4" fill="none" stroke="#0a529f" stroke-width="2.7"/><path d="M124.6 118.2L131.2 125L125.4 125.4Z" fill="#0a529f"/><circle cx="184.2" cy="121.2" r="5.6" fill="none" stroke="#0b5cab" stroke-width="0.9"/><path d="M184.2 120.2V124.2" stroke="#0b5cab" stroke-width="1.1"/><circle cx="184.2" cy="118.3" r="0.7" fill="#0b5cab"/></svg><div class="tx" style="left:148px;top:113.6px;font-size:16px;font-weight:bold;color:#0a529f;letter-spacing:-0.4px">1:1</div><div class="tx" style="left:5.600000000000023px;top:113px;font-size:6.8px;color:#44546a">x1</div><div class="tx" style="left:5.600000000000023px;top:124px;font-size:6.8px;color:#44546a">x5,000</div></div>
<div class="abs" style="left:688px;top:80px;width:189.6px;height:59.5px;background:#fff;border:1px solid #96c1eb;border-radius:3px;overflow:hidden"><div class="abs" style="left:0;top:0;right:0;height:11.2px;background:#96c1eb"></div><div class="tx" style="left:1.5px;top:2px;font-size:8.5px;font-weight:bold;color:#fff">Rulers</div><svg style="left:0;top:0" width="189.6" height="59.5" viewBox="0 0 189.6 59.5"><path d="M166.2 5.4H172.4" stroke="#fff" stroke-width="1.1"/><path d="M178.4 1.6L185.6 9M185.6 1.6L178.4 9" stroke="#fff" stroke-width="1.2"/><path d="M0 25H189.6M0 40.6H189.6M14 10.4V40.6M67 10.4V40.6M120 10.4V40.6M173 10.4V40.6" stroke="#96c1eb" stroke-width="1" fill="none"/><path d="M18.5 59V43.2H169.6V59M40.2 43.2V59M94.6 43.2V59" stroke="#96c1eb" stroke-width="1" fill="none"/><rect x="177.6" y="31.2" width="6.2" height="4.8" fill="#0b5cab"/><rect x="180" y="32.6" width="1.3" height="1.8" fill="#fff"/><path d="M182.4 31.2V29.6Q182.4 27.8 184.2 27.8Q186 27.8 186 29.6V30.4" fill="none" stroke="#0b5cab" stroke-width="0.9"/></svg><div class="tx" style="left:17px;top:14.6px;font-size:8.8px;color:#3c3c3c">1</div><div class="tx" style="left:70px;top:14.6px;font-size:8.8px;color:#3c3c3c">2</div><div class="tx" style="left:123px;top:14.6px;font-size:8.8px;color:#3c3c3c">Δ</div><div class="tx" style="left:16.5px;top:29.7px;font-size:8.8px;color:#0b5cab">17.1 ms</div><div class="tx" style="left:69.5px;top:29.7px;font-size:8.8px;color:#0b5cab">17.1 ms</div><div class="tx" style="left:122.5px;top:29.5px;font-size:8.8px;color:#3c3c3c">817.4 ns</div><div class="tx" style="left:21.4px;top:46.8px;font-size:8.8px;color:#3c3c3c">1/Δ</div><div class="tx" style="left:49px;top:46.8px;font-size:8.8px;color:#3c3c3c">1.223 MHz</div><div class="tx" style="right:21.2px;top:46.8px;font-size:8.8px;color:#3c3c3c">--.--</div></div><div class="abs" style="left:756.7px;top:70.6px;width:1.3px;height:5.6px;background:#1a1a1a"></div><div class="abs" style="left:782.7px;top:70.6px;width:1.3px;height:5.6px;background:#1a1a1a"></div>
</body></html>
